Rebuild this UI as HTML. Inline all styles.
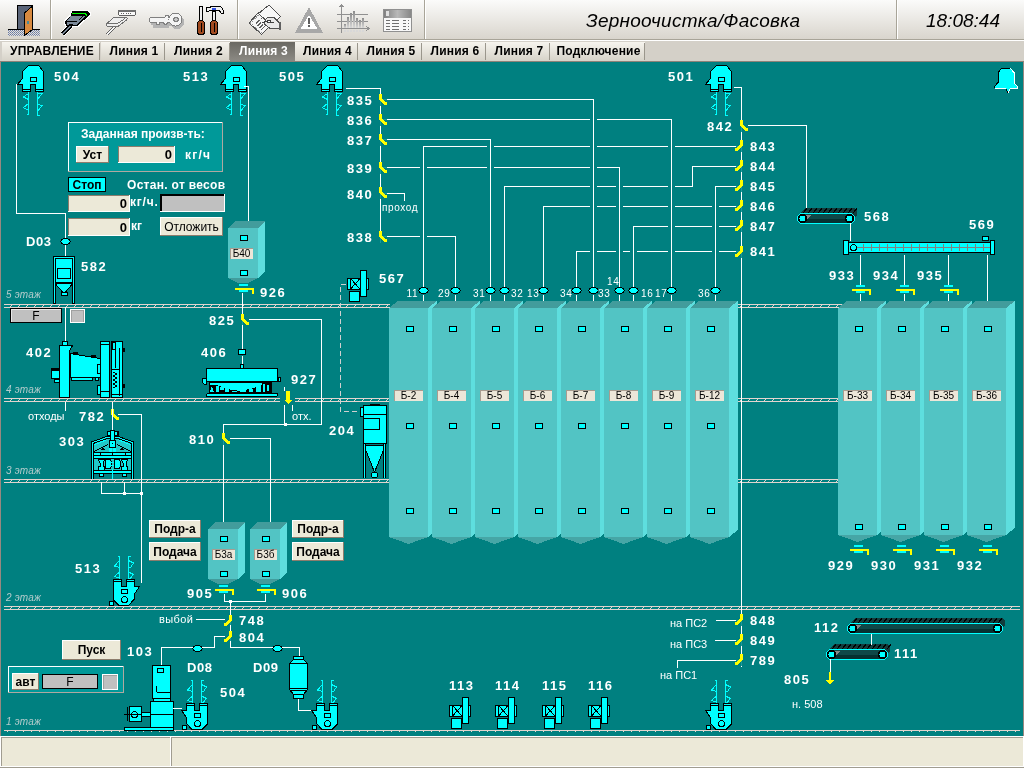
<!DOCTYPE html>
<html><head><meta charset="utf-8"><style>html,body{margin:0;padding:0;width:1024px;height:768px;overflow:hidden;background:#008080}</style></head>
<body>
<svg width="1024" height="768" viewBox="0 0 1024 768" style="position:absolute;left:0;top:0;will-change:transform" shape-rendering="crispEdges">
<defs><linearGradient id="tb" x1="0" y1="0" x2="0" y2="1"><stop offset="0" stop-color="#FBFBFA"/><stop offset="1" stop-color="#D9D5CD"/></linearGradient><linearGradient id="tab" x1="0" y1="0" x2="0" y2="1"><stop offset="0" stop-color="#F6F4EE"/><stop offset="1" stop-color="#D6D2C8"/></linearGradient><linearGradient id="tabs" x1="0" y1="0" x2="0" y2="1"><stop offset="0" stop-color="#6A6862"/><stop offset="1" stop-color="#8C8A84"/></linearGradient></defs>
<rect x="0" y="0" width="1024" height="39" fill="url(#tb)"/>
<rect x="0" y="39" width="1024" height="1" fill="#A8A498"/>
<rect x="0" y="40" width="1024" height="1" fill="#FFFFFF"/>
<rect x="424" y="0" width="1" height="39" fill="#A8A498"/>
<rect x="425" y="0" width="1" height="39" fill="#FFFFFF"/>
<rect x="896" y="0" width="1" height="39" fill="#A8A498"/>
<rect x="897" y="0" width="1" height="39" fill="#FFFFFF"/>
<rect x="50" y="0" width="1" height="39" fill="#A8A498"/>
<rect x="51" y="0" width="1" height="39" fill="#FFFFFF"/>
<rect x="237" y="0" width="1" height="39" fill="#A8A498"/>
<rect x="238" y="0" width="1" height="39" fill="#FFFFFF"/>
<defs><pattern id="dots" width="2" height="2" patternUnits="userSpaceOnUse"><rect width="2" height="2" fill="#E0E0E0"/><rect width="1" height="1" fill="#6878A0"/><rect x="1" y="1" width="1" height="1" fill="#8890A8"/></pattern><linearGradient id="tg" x1="0" y1="0" x2="0" y2="1"><stop offset="0" stop-color="#707070"/><stop offset="1" stop-color="#B0B0B0"/></linearGradient></defs>
<rect x="8" y="29" width="32" height="7" fill="url(#dots)"/>
<path d="M8,29.5 H17 M33,29.5 H40" stroke="#000" fill="none"/>
<rect x="17.5" y="5.5" width="15" height="24" fill="#5A6478" stroke="#000"/>
<path d="M24.5,13 L32.5,6 V29.5 L24.5,35.5 Z" fill="#D88A40" stroke="#000"/>
<rect x="26.5" y="21" width="2" height="3" fill="#4A8A9A"/>
<path d="M62.5,34 L71,25.5" stroke="#FFF" stroke-width="6" fill="none"/>
<path d="M70.5,16 L72.5,11 H88 L89.5,13 V15 L78,25.5 H66 L65,23 V21 Z" fill="none" stroke="#FFF" stroke-width="2.5"/>
<path d="M62.5,34 L71,25.5" stroke="#000" stroke-width="4" fill="none"/>
<path d="M62.5,34 L71,25.5" stroke="#7A8898" stroke-width="1.6" fill="none"/>
<path d="M70.5,16 L72.5,11 H88 L89.5,13 V15 L78,25.5 H66 L65,23 V21 Z" fill="#000"/>
<path d="M72,13.5 H85.5 L86.8,15.5" stroke="#00FF00" stroke-width="1.6" fill="none"/>
<path d="M71,15.5 H86 L77,24.5 H66.5 V21.5 Z" fill="#7A8898"/>
<path d="M67,21.5 H76.5 M78.5,20.5 L83,16" stroke="#000" stroke-width="1" fill="none"/>
<rect x="69" y="24" width="4" height="2" fill="#000"/>
<path d="M107,34.5 L115,26.5" stroke="#606060" stroke-width="3.2" fill="none"/><path d="M107,34.5 L115,26.5" stroke="#F4F4F4" stroke-width="1.2" fill="none"/>
<path d="M113.5,17.5 H126.5 Q127.5,18 127,19.5 L118,26.5 H107.5 Q106.5,26 106.5,25 V24 Z" fill="#EEEEEE" stroke="#707070"/>
<path d="M107.5,23.5 H117.5 L125,18.5" stroke="#707070" fill="none"/>
<rect x="118.5" y="10.5" width="17" height="5" rx="2" fill="#FAFAFA" stroke="#606060"/>
<rect x="118" y="10" width="18" height="2" rx="1" fill="#707070"/>
<path d="M121,13.5 H133" stroke="#606060" stroke-dasharray="1,1.3" fill="none"/>
<g transform="translate(1.5,2.5)" fill="#B4B4B4"><rect x="149" y="17" width="22" height="6" rx="2"/><circle cx="175.5" cy="19.5" r="7"/><rect x="151" y="22" width="16" height="3"/></g>
<path d="M151.5,17.5 H170 V22.5 H167.5 L166.5,24.5 H164.5 L163.5,22.5 H160 L159,24.5 H157 L156,22.5 H151.5 Q149.5,22.5 149.5,20 Q149.5,17.5 151.5,17.5 Z" fill="#F4F4F4" stroke="#808080"/>
<path d="M164.5,17.5 L166,15.5 H168 L169,17.5" fill="#F4F4F4" stroke="#808080"/>
<circle cx="175.5" cy="19.5" r="6.5" fill="#F4F4F4" stroke="#808080"/>
<rect x="169" y="18" width="3" height="4" fill="#F4F4F4"/>
<circle cx="176" cy="19.5" r="2.2" fill="#C8C8C8" stroke="#808080"/>
<rect x="199.5" y="6" width="3" height="15" fill="#F0F0F0" stroke="#000"/>
<rect x="197.5" y="20.5" width="7" height="14" rx="3" fill="#A04A20" stroke="#000"/>
<path d="M201,23 V32" stroke="#000" fill="none"/>
<path d="M206.5,7.5 H210 L211,6 H219 Q223,7 223.5,13 H221 L219,10 H210 L208.5,11.5 H206.5 Z" fill="#F0F0F0" stroke="#000"/>
<rect x="212" y="7.5" width="4" height="2" fill="#3050E0"/>
<rect x="212.5" y="11" width="3" height="10" fill="#F0F0F0" stroke="#000"/>
<rect x="210.5" y="20.5" width="7" height="14" rx="3" fill="#A04A20" stroke="#000"/>
<path d="M214,23 V32" stroke="#000" fill="none"/>
<path d="M258.5,13.5 L269,5 L280.5,16.5 L270,27 Z" fill="#F8F8F8" stroke="#505050"/>
<path d="M258.5,12.5 L249,23 L261.5,34.5 L271,25 L258.5,13.5 Z" fill="#F6F6F6" stroke="#505050"/>
<path d="M250.5,23 L259,14.5 M250.5,23 L261.5,33" stroke="#909090" stroke-dasharray="1,1" fill="none"/>
<path d="M256,23.5 L259.5,20 M257.5,26 L261,22.5 M259.5,28 L263,24.5 M261,30 L264.5,26.5 M261,19 L263,17" stroke="#606060" fill="none"/>
<path d="M265.5,19.5 L268.5,17 H273.5 L278.5,22 H280.5 V29.5 L277.5,28 H269.5 L264,24 Z" fill="#E8E8E8" stroke="#505050"/>
<rect x="279" y="22" width="2" height="8" fill="#606060"/>
<circle cx="269" cy="21.5" r="1.6" fill="#FFF" stroke="#404040"/>
<path d="M262,22.5 L267,21.5 M271,22.5 H274" stroke="#404040" fill="none"/>
<path d="M309,7 L323,33 H295 Z" fill="#A8A8A8"/>
<path d="M309,15 L317.5,29 H300.5 Z" fill="#FFFFFF"/>
<rect x="308" y="18" width="2" height="6" fill="#606060"/><rect x="308" y="25" width="2" height="2" fill="#606060"/>
<path d="M341.5,5 V33 M337,28.5 H369 M337,14.5 H368 M337,21.5 H368" stroke="#909090" fill="none"/>
<defs><linearGradient id="bg" x1="0" y1="0" x2="0" y2="1"><stop offset="0" stop-color="#8C8C8C"/><stop offset="1" stop-color="#D8D8D8"/></linearGradient><linearGradient id="tg2" x1="0" y1="0" x2="1" y2="0"><stop offset="0" stop-color="#808080"/><stop offset="0.5" stop-color="#B8B8B8"/><stop offset="1" stop-color="#888888"/></linearGradient></defs>
<rect x="344" y="24" width="2" height="4" fill="url(#bg)"/>
<rect x="347" y="17" width="2" height="11" fill="url(#bg)"/>
<rect x="350" y="13" width="2" height="15" fill="url(#bg)"/>
<rect x="353" y="11" width="2" height="17" fill="url(#bg)"/>
<rect x="356" y="18" width="2" height="10" fill="url(#bg)"/>
<rect x="359" y="20" width="2" height="8" fill="url(#bg)"/>
<rect x="362" y="18" width="2" height="10" fill="url(#bg)"/>
<path d="M344,31 H364" stroke="#D8D8D8" stroke-dasharray="1.5,1.5" stroke-width="2" fill="none"/>
<path d="M339.5,7 L341.5,4.5 L343.5,7 M366.5,26.5 L369,28.5 L366.5,30.5" stroke="#909090" fill="none"/>
<rect x="383.5" y="9.5" width="28" height="22" fill="#F8F8F8" stroke="#909090"/>
<rect x="384" y="10" width="27" height="8" fill="url(#tg2)"/><rect x="386" y="11" width="3" height="5" fill="#E0E0E0"/>
<path d="M386,20.5 H390 M392,20.5 H399 M403,20.5 H406 M408,20.5 H409" stroke="#707070" fill="none"/>
<path d="M386,23.5 H390 M392,23.5 H399 M403,23.5 H406 M408,23.5 H409" stroke="#707070" fill="none"/>
<path d="M386,26.5 H390 M392,26.5 H399 M403,26.5 H406 M408,26.5 H409" stroke="#707070" fill="none"/>
<path d="M386,29.5 H390 M392,29.5 H399 M403,29.5 H406 M408,29.5 H409" stroke="#707070" fill="none"/>
<text x="586" y="27" font-family="Liberation Sans" font-size="19" font-weight="normal" font-style="italic" fill="#000" text-anchor="start" letter-spacing="0.25">Зерноочистка/Фасовка</text>
<text x="926" y="27" font-family="Liberation Sans" font-size="19" font-weight="normal" font-style="italic" fill="#000" text-anchor="start">18:08:44</text>
<rect x="0" y="41" width="1024" height="21" fill="#D4D0C8"/>
<rect x="2" y="42" width="98" height="19" fill="url(#tab)"/>
<rect x="99" y="43" width="1" height="17" fill="#9A968C"/>
<text x="52.0" y="55" font-family="Liberation Sans" font-size="12" font-weight="bold" font-style="normal" fill="#000" text-anchor="middle" letter-spacing="0.2">УПРАВЛЕНИЕ</text>
<rect x="101" y="42" width="64" height="19" fill="url(#tab)"/>
<rect x="164" y="43" width="1" height="17" fill="#9A968C"/>
<text x="134.0" y="55" font-family="Liberation Sans" font-size="12" font-weight="bold" font-style="normal" fill="#000" text-anchor="middle" letter-spacing="0.2">Линия 1</text>
<rect x="165" y="42" width="65" height="19" fill="url(#tab)"/>
<rect x="229" y="43" width="1" height="17" fill="#9A968C"/>
<text x="198.5" y="55" font-family="Liberation Sans" font-size="12" font-weight="bold" font-style="normal" fill="#000" text-anchor="middle" letter-spacing="0.2">Линия 2</text>
<rect x="230" y="42" width="65" height="19" fill="url(#tabs)"/>
<text x="263.5" y="55" font-family="Liberation Sans" font-size="12" font-weight="bold" font-style="normal" fill="#FFF" text-anchor="middle" letter-spacing="0.2">Линия 3</text>
<rect x="295" y="42" width="63" height="19" fill="url(#tab)"/>
<rect x="357" y="43" width="1" height="17" fill="#9A968C"/>
<text x="327.5" y="55" font-family="Liberation Sans" font-size="12" font-weight="bold" font-style="normal" fill="#000" text-anchor="middle" letter-spacing="0.2">Линия 4</text>
<rect x="358" y="42" width="64" height="19" fill="url(#tab)"/>
<rect x="421" y="43" width="1" height="17" fill="#9A968C"/>
<text x="391.0" y="55" font-family="Liberation Sans" font-size="12" font-weight="bold" font-style="normal" fill="#000" text-anchor="middle" letter-spacing="0.2">Линия 5</text>
<rect x="422" y="42" width="64" height="19" fill="url(#tab)"/>
<rect x="485" y="43" width="1" height="17" fill="#9A968C"/>
<text x="455.0" y="55" font-family="Liberation Sans" font-size="12" font-weight="bold" font-style="normal" fill="#000" text-anchor="middle" letter-spacing="0.2">Линия 6</text>
<rect x="486" y="42" width="64" height="19" fill="url(#tab)"/>
<rect x="549" y="43" width="1" height="17" fill="#9A968C"/>
<text x="519.0" y="55" font-family="Liberation Sans" font-size="12" font-weight="bold" font-style="normal" fill="#000" text-anchor="middle" letter-spacing="0.2">Линия 7</text>
<rect x="550" y="42" width="95" height="19" fill="url(#tab)"/>
<rect x="644" y="43" width="1" height="17" fill="#9A968C"/>
<text x="598.5" y="55" font-family="Liberation Sans" font-size="12" font-weight="bold" font-style="normal" fill="#000" text-anchor="middle" letter-spacing="0.2">Подключение</text>
<rect x="0" y="61" width="1024" height="1" fill="#8C8278"/>
<rect x="0" y="62" width="1024" height="674" fill="#008080"/>
<rect x="0" y="62" width="1" height="674" fill="#988880"/>
<rect x="0" y="736" width="1024" height="32" fill="#ECE9D8"/>
<rect x="0" y="736" width="1024" height="1" fill="#FFFFFF"/>
<rect x="1" y="737" width="169" height="1" fill="#A09C90"/>
<rect x="1" y="737" width="1" height="29" fill="#A09C90"/>
<rect x="170" y="737" width="1" height="30" fill="#FFFFFF"/>
<rect x="1" y="766" width="170" height="1" fill="#FFFFFF"/>
<rect x="171" y="737" width="852" height="1" fill="#A09C90"/>
<rect x="171" y="737" width="1" height="29" fill="#A09C90"/>
<rect x="1023" y="737" width="1" height="30" fill="#FFFFFF"/>
<rect x="171" y="766" width="853" height="1" fill="#FFFFFF"/>
<rect x="0" y="736" width="1" height="32" fill="#FFFFFF"/>
<rect x="0" y="767" width="1024" height="1" fill="#A09C90"/>
<rect x="4" y="304" width="386" height="1" fill="#E2D4CE"/>
<rect x="4" y="307" width="386" height="1" fill="#E2D4CE"/>
<g fill="#E2D4CE"><rect x="11" y="305" width="1" height="1"/><rect x="10" y="306" width="1" height="1"/><rect x="19" y="305" width="1" height="1"/><rect x="18" y="306" width="1" height="1"/><rect x="27" y="305" width="1" height="1"/><rect x="26" y="306" width="1" height="1"/><rect x="35" y="305" width="1" height="1"/><rect x="34" y="306" width="1" height="1"/><rect x="43" y="305" width="1" height="1"/><rect x="42" y="306" width="1" height="1"/><rect x="51" y="305" width="1" height="1"/><rect x="50" y="306" width="1" height="1"/><rect x="59" y="305" width="1" height="1"/><rect x="58" y="306" width="1" height="1"/><rect x="67" y="305" width="1" height="1"/><rect x="66" y="306" width="1" height="1"/><rect x="75" y="305" width="1" height="1"/><rect x="74" y="306" width="1" height="1"/><rect x="83" y="305" width="1" height="1"/><rect x="82" y="306" width="1" height="1"/><rect x="91" y="305" width="1" height="1"/><rect x="90" y="306" width="1" height="1"/><rect x="99" y="305" width="1" height="1"/><rect x="98" y="306" width="1" height="1"/><rect x="107" y="305" width="1" height="1"/><rect x="106" y="306" width="1" height="1"/><rect x="115" y="305" width="1" height="1"/><rect x="114" y="306" width="1" height="1"/><rect x="123" y="305" width="1" height="1"/><rect x="122" y="306" width="1" height="1"/><rect x="131" y="305" width="1" height="1"/><rect x="130" y="306" width="1" height="1"/><rect x="139" y="305" width="1" height="1"/><rect x="138" y="306" width="1" height="1"/><rect x="147" y="305" width="1" height="1"/><rect x="146" y="306" width="1" height="1"/><rect x="155" y="305" width="1" height="1"/><rect x="154" y="306" width="1" height="1"/><rect x="163" y="305" width="1" height="1"/><rect x="162" y="306" width="1" height="1"/><rect x="171" y="305" width="1" height="1"/><rect x="170" y="306" width="1" height="1"/><rect x="179" y="305" width="1" height="1"/><rect x="178" y="306" width="1" height="1"/><rect x="187" y="305" width="1" height="1"/><rect x="186" y="306" width="1" height="1"/><rect x="195" y="305" width="1" height="1"/><rect x="194" y="306" width="1" height="1"/><rect x="203" y="305" width="1" height="1"/><rect x="202" y="306" width="1" height="1"/><rect x="211" y="305" width="1" height="1"/><rect x="210" y="306" width="1" height="1"/><rect x="219" y="305" width="1" height="1"/><rect x="218" y="306" width="1" height="1"/><rect x="227" y="305" width="1" height="1"/><rect x="226" y="306" width="1" height="1"/><rect x="235" y="305" width="1" height="1"/><rect x="234" y="306" width="1" height="1"/><rect x="243" y="305" width="1" height="1"/><rect x="242" y="306" width="1" height="1"/><rect x="251" y="305" width="1" height="1"/><rect x="250" y="306" width="1" height="1"/><rect x="259" y="305" width="1" height="1"/><rect x="258" y="306" width="1" height="1"/><rect x="267" y="305" width="1" height="1"/><rect x="266" y="306" width="1" height="1"/><rect x="275" y="305" width="1" height="1"/><rect x="274" y="306" width="1" height="1"/><rect x="283" y="305" width="1" height="1"/><rect x="282" y="306" width="1" height="1"/><rect x="291" y="305" width="1" height="1"/><rect x="290" y="306" width="1" height="1"/><rect x="299" y="305" width="1" height="1"/><rect x="298" y="306" width="1" height="1"/><rect x="307" y="305" width="1" height="1"/><rect x="306" y="306" width="1" height="1"/><rect x="315" y="305" width="1" height="1"/><rect x="314" y="306" width="1" height="1"/><rect x="323" y="305" width="1" height="1"/><rect x="322" y="306" width="1" height="1"/><rect x="331" y="305" width="1" height="1"/><rect x="330" y="306" width="1" height="1"/><rect x="339" y="305" width="1" height="1"/><rect x="338" y="306" width="1" height="1"/><rect x="347" y="305" width="1" height="1"/><rect x="346" y="306" width="1" height="1"/><rect x="355" y="305" width="1" height="1"/><rect x="354" y="306" width="1" height="1"/><rect x="363" y="305" width="1" height="1"/><rect x="362" y="306" width="1" height="1"/><rect x="371" y="305" width="1" height="1"/><rect x="370" y="306" width="1" height="1"/><rect x="379" y="305" width="1" height="1"/><rect x="378" y="306" width="1" height="1"/><rect x="387" y="305" width="1" height="1"/><rect x="386" y="306" width="1" height="1"/></g>
<rect x="738" y="304" width="105" height="1" fill="#E2D4CE"/>
<rect x="738" y="307" width="105" height="1" fill="#E2D4CE"/>
<g fill="#E2D4CE"><rect x="741" y="305" width="1" height="1"/><rect x="740" y="306" width="1" height="1"/><rect x="749" y="305" width="1" height="1"/><rect x="748" y="306" width="1" height="1"/><rect x="757" y="305" width="1" height="1"/><rect x="756" y="306" width="1" height="1"/><rect x="765" y="305" width="1" height="1"/><rect x="764" y="306" width="1" height="1"/><rect x="773" y="305" width="1" height="1"/><rect x="772" y="306" width="1" height="1"/><rect x="781" y="305" width="1" height="1"/><rect x="780" y="306" width="1" height="1"/><rect x="789" y="305" width="1" height="1"/><rect x="788" y="306" width="1" height="1"/><rect x="797" y="305" width="1" height="1"/><rect x="796" y="306" width="1" height="1"/><rect x="805" y="305" width="1" height="1"/><rect x="804" y="306" width="1" height="1"/><rect x="813" y="305" width="1" height="1"/><rect x="812" y="306" width="1" height="1"/><rect x="821" y="305" width="1" height="1"/><rect x="820" y="306" width="1" height="1"/><rect x="829" y="305" width="1" height="1"/><rect x="828" y="306" width="1" height="1"/><rect x="837" y="305" width="1" height="1"/><rect x="836" y="306" width="1" height="1"/></g>
<rect x="4" y="398" width="276" height="1" fill="#E2D4CE"/>
<rect x="4" y="401" width="276" height="1" fill="#E2D4CE"/>
<g fill="#E2D4CE"><rect x="11" y="399" width="1" height="1"/><rect x="10" y="400" width="1" height="1"/><rect x="19" y="399" width="1" height="1"/><rect x="18" y="400" width="1" height="1"/><rect x="27" y="399" width="1" height="1"/><rect x="26" y="400" width="1" height="1"/><rect x="35" y="399" width="1" height="1"/><rect x="34" y="400" width="1" height="1"/><rect x="43" y="399" width="1" height="1"/><rect x="42" y="400" width="1" height="1"/><rect x="51" y="399" width="1" height="1"/><rect x="50" y="400" width="1" height="1"/><rect x="59" y="399" width="1" height="1"/><rect x="58" y="400" width="1" height="1"/><rect x="67" y="399" width="1" height="1"/><rect x="66" y="400" width="1" height="1"/><rect x="75" y="399" width="1" height="1"/><rect x="74" y="400" width="1" height="1"/><rect x="83" y="399" width="1" height="1"/><rect x="82" y="400" width="1" height="1"/><rect x="91" y="399" width="1" height="1"/><rect x="90" y="400" width="1" height="1"/><rect x="99" y="399" width="1" height="1"/><rect x="98" y="400" width="1" height="1"/><rect x="107" y="399" width="1" height="1"/><rect x="106" y="400" width="1" height="1"/><rect x="115" y="399" width="1" height="1"/><rect x="114" y="400" width="1" height="1"/><rect x="123" y="399" width="1" height="1"/><rect x="122" y="400" width="1" height="1"/><rect x="131" y="399" width="1" height="1"/><rect x="130" y="400" width="1" height="1"/><rect x="139" y="399" width="1" height="1"/><rect x="138" y="400" width="1" height="1"/><rect x="147" y="399" width="1" height="1"/><rect x="146" y="400" width="1" height="1"/><rect x="155" y="399" width="1" height="1"/><rect x="154" y="400" width="1" height="1"/><rect x="163" y="399" width="1" height="1"/><rect x="162" y="400" width="1" height="1"/><rect x="171" y="399" width="1" height="1"/><rect x="170" y="400" width="1" height="1"/><rect x="179" y="399" width="1" height="1"/><rect x="178" y="400" width="1" height="1"/><rect x="187" y="399" width="1" height="1"/><rect x="186" y="400" width="1" height="1"/><rect x="195" y="399" width="1" height="1"/><rect x="194" y="400" width="1" height="1"/><rect x="203" y="399" width="1" height="1"/><rect x="202" y="400" width="1" height="1"/><rect x="211" y="399" width="1" height="1"/><rect x="210" y="400" width="1" height="1"/><rect x="219" y="399" width="1" height="1"/><rect x="218" y="400" width="1" height="1"/><rect x="227" y="399" width="1" height="1"/><rect x="226" y="400" width="1" height="1"/><rect x="235" y="399" width="1" height="1"/><rect x="234" y="400" width="1" height="1"/><rect x="243" y="399" width="1" height="1"/><rect x="242" y="400" width="1" height="1"/><rect x="251" y="399" width="1" height="1"/><rect x="250" y="400" width="1" height="1"/><rect x="259" y="399" width="1" height="1"/><rect x="258" y="400" width="1" height="1"/><rect x="267" y="399" width="1" height="1"/><rect x="266" y="400" width="1" height="1"/><rect x="275" y="399" width="1" height="1"/><rect x="274" y="400" width="1" height="1"/></g>
<rect x="295" y="398" width="95" height="1" fill="#E2D4CE"/>
<rect x="295" y="401" width="95" height="1" fill="#E2D4CE"/>
<g fill="#E2D4CE"><rect x="299" y="399" width="1" height="1"/><rect x="298" y="400" width="1" height="1"/><rect x="307" y="399" width="1" height="1"/><rect x="306" y="400" width="1" height="1"/><rect x="315" y="399" width="1" height="1"/><rect x="314" y="400" width="1" height="1"/><rect x="323" y="399" width="1" height="1"/><rect x="322" y="400" width="1" height="1"/><rect x="331" y="399" width="1" height="1"/><rect x="330" y="400" width="1" height="1"/><rect x="339" y="399" width="1" height="1"/><rect x="338" y="400" width="1" height="1"/><rect x="347" y="399" width="1" height="1"/><rect x="346" y="400" width="1" height="1"/><rect x="355" y="399" width="1" height="1"/><rect x="354" y="400" width="1" height="1"/><rect x="363" y="399" width="1" height="1"/><rect x="362" y="400" width="1" height="1"/><rect x="371" y="399" width="1" height="1"/><rect x="370" y="400" width="1" height="1"/><rect x="379" y="399" width="1" height="1"/><rect x="378" y="400" width="1" height="1"/><rect x="387" y="399" width="1" height="1"/><rect x="386" y="400" width="1" height="1"/></g>
<rect x="738" y="398" width="101" height="1" fill="#E2D4CE"/>
<rect x="738" y="401" width="101" height="1" fill="#E2D4CE"/>
<g fill="#E2D4CE"><rect x="741" y="399" width="1" height="1"/><rect x="740" y="400" width="1" height="1"/><rect x="749" y="399" width="1" height="1"/><rect x="748" y="400" width="1" height="1"/><rect x="757" y="399" width="1" height="1"/><rect x="756" y="400" width="1" height="1"/><rect x="765" y="399" width="1" height="1"/><rect x="764" y="400" width="1" height="1"/><rect x="773" y="399" width="1" height="1"/><rect x="772" y="400" width="1" height="1"/><rect x="781" y="399" width="1" height="1"/><rect x="780" y="400" width="1" height="1"/><rect x="789" y="399" width="1" height="1"/><rect x="788" y="400" width="1" height="1"/><rect x="797" y="399" width="1" height="1"/><rect x="796" y="400" width="1" height="1"/><rect x="805" y="399" width="1" height="1"/><rect x="804" y="400" width="1" height="1"/><rect x="813" y="399" width="1" height="1"/><rect x="812" y="400" width="1" height="1"/><rect x="821" y="399" width="1" height="1"/><rect x="820" y="400" width="1" height="1"/><rect x="829" y="399" width="1" height="1"/><rect x="828" y="400" width="1" height="1"/><rect x="837" y="399" width="1" height="1"/><rect x="836" y="400" width="1" height="1"/></g>
<rect x="4" y="479" width="386" height="1" fill="#E2D4CE"/>
<rect x="4" y="482" width="386" height="1" fill="#E2D4CE"/>
<g fill="#E2D4CE"><rect x="11" y="480" width="1" height="1"/><rect x="10" y="481" width="1" height="1"/><rect x="19" y="480" width="1" height="1"/><rect x="18" y="481" width="1" height="1"/><rect x="27" y="480" width="1" height="1"/><rect x="26" y="481" width="1" height="1"/><rect x="35" y="480" width="1" height="1"/><rect x="34" y="481" width="1" height="1"/><rect x="43" y="480" width="1" height="1"/><rect x="42" y="481" width="1" height="1"/><rect x="51" y="480" width="1" height="1"/><rect x="50" y="481" width="1" height="1"/><rect x="59" y="480" width="1" height="1"/><rect x="58" y="481" width="1" height="1"/><rect x="67" y="480" width="1" height="1"/><rect x="66" y="481" width="1" height="1"/><rect x="75" y="480" width="1" height="1"/><rect x="74" y="481" width="1" height="1"/><rect x="83" y="480" width="1" height="1"/><rect x="82" y="481" width="1" height="1"/><rect x="91" y="480" width="1" height="1"/><rect x="90" y="481" width="1" height="1"/><rect x="99" y="480" width="1" height="1"/><rect x="98" y="481" width="1" height="1"/><rect x="107" y="480" width="1" height="1"/><rect x="106" y="481" width="1" height="1"/><rect x="115" y="480" width="1" height="1"/><rect x="114" y="481" width="1" height="1"/><rect x="123" y="480" width="1" height="1"/><rect x="122" y="481" width="1" height="1"/><rect x="131" y="480" width="1" height="1"/><rect x="130" y="481" width="1" height="1"/><rect x="139" y="480" width="1" height="1"/><rect x="138" y="481" width="1" height="1"/><rect x="147" y="480" width="1" height="1"/><rect x="146" y="481" width="1" height="1"/><rect x="155" y="480" width="1" height="1"/><rect x="154" y="481" width="1" height="1"/><rect x="163" y="480" width="1" height="1"/><rect x="162" y="481" width="1" height="1"/><rect x="171" y="480" width="1" height="1"/><rect x="170" y="481" width="1" height="1"/><rect x="179" y="480" width="1" height="1"/><rect x="178" y="481" width="1" height="1"/><rect x="187" y="480" width="1" height="1"/><rect x="186" y="481" width="1" height="1"/><rect x="195" y="480" width="1" height="1"/><rect x="194" y="481" width="1" height="1"/><rect x="203" y="480" width="1" height="1"/><rect x="202" y="481" width="1" height="1"/><rect x="211" y="480" width="1" height="1"/><rect x="210" y="481" width="1" height="1"/><rect x="219" y="480" width="1" height="1"/><rect x="218" y="481" width="1" height="1"/><rect x="227" y="480" width="1" height="1"/><rect x="226" y="481" width="1" height="1"/><rect x="235" y="480" width="1" height="1"/><rect x="234" y="481" width="1" height="1"/><rect x="243" y="480" width="1" height="1"/><rect x="242" y="481" width="1" height="1"/><rect x="251" y="480" width="1" height="1"/><rect x="250" y="481" width="1" height="1"/><rect x="259" y="480" width="1" height="1"/><rect x="258" y="481" width="1" height="1"/><rect x="267" y="480" width="1" height="1"/><rect x="266" y="481" width="1" height="1"/><rect x="275" y="480" width="1" height="1"/><rect x="274" y="481" width="1" height="1"/><rect x="283" y="480" width="1" height="1"/><rect x="282" y="481" width="1" height="1"/><rect x="291" y="480" width="1" height="1"/><rect x="290" y="481" width="1" height="1"/><rect x="299" y="480" width="1" height="1"/><rect x="298" y="481" width="1" height="1"/><rect x="307" y="480" width="1" height="1"/><rect x="306" y="481" width="1" height="1"/><rect x="315" y="480" width="1" height="1"/><rect x="314" y="481" width="1" height="1"/><rect x="323" y="480" width="1" height="1"/><rect x="322" y="481" width="1" height="1"/><rect x="331" y="480" width="1" height="1"/><rect x="330" y="481" width="1" height="1"/><rect x="339" y="480" width="1" height="1"/><rect x="338" y="481" width="1" height="1"/><rect x="347" y="480" width="1" height="1"/><rect x="346" y="481" width="1" height="1"/><rect x="355" y="480" width="1" height="1"/><rect x="354" y="481" width="1" height="1"/><rect x="363" y="480" width="1" height="1"/><rect x="362" y="481" width="1" height="1"/><rect x="371" y="480" width="1" height="1"/><rect x="370" y="481" width="1" height="1"/><rect x="379" y="480" width="1" height="1"/><rect x="378" y="481" width="1" height="1"/><rect x="387" y="480" width="1" height="1"/><rect x="386" y="481" width="1" height="1"/></g>
<rect x="738" y="479" width="101" height="1" fill="#E2D4CE"/>
<rect x="738" y="482" width="101" height="1" fill="#E2D4CE"/>
<g fill="#E2D4CE"><rect x="741" y="480" width="1" height="1"/><rect x="740" y="481" width="1" height="1"/><rect x="749" y="480" width="1" height="1"/><rect x="748" y="481" width="1" height="1"/><rect x="757" y="480" width="1" height="1"/><rect x="756" y="481" width="1" height="1"/><rect x="765" y="480" width="1" height="1"/><rect x="764" y="481" width="1" height="1"/><rect x="773" y="480" width="1" height="1"/><rect x="772" y="481" width="1" height="1"/><rect x="781" y="480" width="1" height="1"/><rect x="780" y="481" width="1" height="1"/><rect x="789" y="480" width="1" height="1"/><rect x="788" y="481" width="1" height="1"/><rect x="797" y="480" width="1" height="1"/><rect x="796" y="481" width="1" height="1"/><rect x="805" y="480" width="1" height="1"/><rect x="804" y="481" width="1" height="1"/><rect x="813" y="480" width="1" height="1"/><rect x="812" y="481" width="1" height="1"/><rect x="821" y="480" width="1" height="1"/><rect x="820" y="481" width="1" height="1"/><rect x="829" y="480" width="1" height="1"/><rect x="828" y="481" width="1" height="1"/><rect x="837" y="480" width="1" height="1"/><rect x="836" y="481" width="1" height="1"/></g>
<rect x="4" y="606" width="1016" height="1" fill="#E2D4CE"/>
<rect x="4" y="609" width="1016" height="1" fill="#E2D4CE"/>
<g fill="#E2D4CE"><rect x="11" y="607" width="1" height="1"/><rect x="10" y="608" width="1" height="1"/><rect x="19" y="607" width="1" height="1"/><rect x="18" y="608" width="1" height="1"/><rect x="27" y="607" width="1" height="1"/><rect x="26" y="608" width="1" height="1"/><rect x="35" y="607" width="1" height="1"/><rect x="34" y="608" width="1" height="1"/><rect x="43" y="607" width="1" height="1"/><rect x="42" y="608" width="1" height="1"/><rect x="51" y="607" width="1" height="1"/><rect x="50" y="608" width="1" height="1"/><rect x="59" y="607" width="1" height="1"/><rect x="58" y="608" width="1" height="1"/><rect x="67" y="607" width="1" height="1"/><rect x="66" y="608" width="1" height="1"/><rect x="75" y="607" width="1" height="1"/><rect x="74" y="608" width="1" height="1"/><rect x="83" y="607" width="1" height="1"/><rect x="82" y="608" width="1" height="1"/><rect x="91" y="607" width="1" height="1"/><rect x="90" y="608" width="1" height="1"/><rect x="99" y="607" width="1" height="1"/><rect x="98" y="608" width="1" height="1"/><rect x="107" y="607" width="1" height="1"/><rect x="106" y="608" width="1" height="1"/><rect x="115" y="607" width="1" height="1"/><rect x="114" y="608" width="1" height="1"/><rect x="123" y="607" width="1" height="1"/><rect x="122" y="608" width="1" height="1"/><rect x="131" y="607" width="1" height="1"/><rect x="130" y="608" width="1" height="1"/><rect x="139" y="607" width="1" height="1"/><rect x="138" y="608" width="1" height="1"/><rect x="147" y="607" width="1" height="1"/><rect x="146" y="608" width="1" height="1"/><rect x="155" y="607" width="1" height="1"/><rect x="154" y="608" width="1" height="1"/><rect x="163" y="607" width="1" height="1"/><rect x="162" y="608" width="1" height="1"/><rect x="171" y="607" width="1" height="1"/><rect x="170" y="608" width="1" height="1"/><rect x="179" y="607" width="1" height="1"/><rect x="178" y="608" width="1" height="1"/><rect x="187" y="607" width="1" height="1"/><rect x="186" y="608" width="1" height="1"/><rect x="195" y="607" width="1" height="1"/><rect x="194" y="608" width="1" height="1"/><rect x="203" y="607" width="1" height="1"/><rect x="202" y="608" width="1" height="1"/><rect x="211" y="607" width="1" height="1"/><rect x="210" y="608" width="1" height="1"/><rect x="219" y="607" width="1" height="1"/><rect x="218" y="608" width="1" height="1"/><rect x="227" y="607" width="1" height="1"/><rect x="226" y="608" width="1" height="1"/><rect x="235" y="607" width="1" height="1"/><rect x="234" y="608" width="1" height="1"/><rect x="243" y="607" width="1" height="1"/><rect x="242" y="608" width="1" height="1"/><rect x="251" y="607" width="1" height="1"/><rect x="250" y="608" width="1" height="1"/><rect x="259" y="607" width="1" height="1"/><rect x="258" y="608" width="1" height="1"/><rect x="267" y="607" width="1" height="1"/><rect x="266" y="608" width="1" height="1"/><rect x="275" y="607" width="1" height="1"/><rect x="274" y="608" width="1" height="1"/><rect x="283" y="607" width="1" height="1"/><rect x="282" y="608" width="1" height="1"/><rect x="291" y="607" width="1" height="1"/><rect x="290" y="608" width="1" height="1"/><rect x="299" y="607" width="1" height="1"/><rect x="298" y="608" width="1" height="1"/><rect x="307" y="607" width="1" height="1"/><rect x="306" y="608" width="1" height="1"/><rect x="315" y="607" width="1" height="1"/><rect x="314" y="608" width="1" height="1"/><rect x="323" y="607" width="1" height="1"/><rect x="322" y="608" width="1" height="1"/><rect x="331" y="607" width="1" height="1"/><rect x="330" y="608" width="1" height="1"/><rect x="339" y="607" width="1" height="1"/><rect x="338" y="608" width="1" height="1"/><rect x="347" y="607" width="1" height="1"/><rect x="346" y="608" width="1" height="1"/><rect x="355" y="607" width="1" height="1"/><rect x="354" y="608" width="1" height="1"/><rect x="363" y="607" width="1" height="1"/><rect x="362" y="608" width="1" height="1"/><rect x="371" y="607" width="1" height="1"/><rect x="370" y="608" width="1" height="1"/><rect x="379" y="607" width="1" height="1"/><rect x="378" y="608" width="1" height="1"/><rect x="387" y="607" width="1" height="1"/><rect x="386" y="608" width="1" height="1"/><rect x="395" y="607" width="1" height="1"/><rect x="394" y="608" width="1" height="1"/><rect x="403" y="607" width="1" height="1"/><rect x="402" y="608" width="1" height="1"/><rect x="411" y="607" width="1" height="1"/><rect x="410" y="608" width="1" height="1"/><rect x="419" y="607" width="1" height="1"/><rect x="418" y="608" width="1" height="1"/><rect x="427" y="607" width="1" height="1"/><rect x="426" y="608" width="1" height="1"/><rect x="435" y="607" width="1" height="1"/><rect x="434" y="608" width="1" height="1"/><rect x="443" y="607" width="1" height="1"/><rect x="442" y="608" width="1" height="1"/><rect x="451" y="607" width="1" height="1"/><rect x="450" y="608" width="1" height="1"/><rect x="459" y="607" width="1" height="1"/><rect x="458" y="608" width="1" height="1"/><rect x="467" y="607" width="1" height="1"/><rect x="466" y="608" width="1" height="1"/><rect x="475" y="607" width="1" height="1"/><rect x="474" y="608" width="1" height="1"/><rect x="483" y="607" width="1" height="1"/><rect x="482" y="608" width="1" height="1"/><rect x="491" y="607" width="1" height="1"/><rect x="490" y="608" width="1" height="1"/><rect x="499" y="607" width="1" height="1"/><rect x="498" y="608" width="1" height="1"/><rect x="507" y="607" width="1" height="1"/><rect x="506" y="608" width="1" height="1"/><rect x="515" y="607" width="1" height="1"/><rect x="514" y="608" width="1" height="1"/><rect x="523" y="607" width="1" height="1"/><rect x="522" y="608" width="1" height="1"/><rect x="531" y="607" width="1" height="1"/><rect x="530" y="608" width="1" height="1"/><rect x="539" y="607" width="1" height="1"/><rect x="538" y="608" width="1" height="1"/><rect x="547" y="607" width="1" height="1"/><rect x="546" y="608" width="1" height="1"/><rect x="555" y="607" width="1" height="1"/><rect x="554" y="608" width="1" height="1"/><rect x="563" y="607" width="1" height="1"/><rect x="562" y="608" width="1" height="1"/><rect x="571" y="607" width="1" height="1"/><rect x="570" y="608" width="1" height="1"/><rect x="579" y="607" width="1" height="1"/><rect x="578" y="608" width="1" height="1"/><rect x="587" y="607" width="1" height="1"/><rect x="586" y="608" width="1" height="1"/><rect x="595" y="607" width="1" height="1"/><rect x="594" y="608" width="1" height="1"/><rect x="603" y="607" width="1" height="1"/><rect x="602" y="608" width="1" height="1"/><rect x="611" y="607" width="1" height="1"/><rect x="610" y="608" width="1" height="1"/><rect x="619" y="607" width="1" height="1"/><rect x="618" y="608" width="1" height="1"/><rect x="627" y="607" width="1" height="1"/><rect x="626" y="608" width="1" height="1"/><rect x="635" y="607" width="1" height="1"/><rect x="634" y="608" width="1" height="1"/><rect x="643" y="607" width="1" height="1"/><rect x="642" y="608" width="1" height="1"/><rect x="651" y="607" width="1" height="1"/><rect x="650" y="608" width="1" height="1"/><rect x="659" y="607" width="1" height="1"/><rect x="658" y="608" width="1" height="1"/><rect x="667" y="607" width="1" height="1"/><rect x="666" y="608" width="1" height="1"/><rect x="675" y="607" width="1" height="1"/><rect x="674" y="608" width="1" height="1"/><rect x="683" y="607" width="1" height="1"/><rect x="682" y="608" width="1" height="1"/><rect x="691" y="607" width="1" height="1"/><rect x="690" y="608" width="1" height="1"/><rect x="699" y="607" width="1" height="1"/><rect x="698" y="608" width="1" height="1"/><rect x="707" y="607" width="1" height="1"/><rect x="706" y="608" width="1" height="1"/><rect x="715" y="607" width="1" height="1"/><rect x="714" y="608" width="1" height="1"/><rect x="723" y="607" width="1" height="1"/><rect x="722" y="608" width="1" height="1"/><rect x="731" y="607" width="1" height="1"/><rect x="730" y="608" width="1" height="1"/><rect x="739" y="607" width="1" height="1"/><rect x="738" y="608" width="1" height="1"/><rect x="747" y="607" width="1" height="1"/><rect x="746" y="608" width="1" height="1"/><rect x="755" y="607" width="1" height="1"/><rect x="754" y="608" width="1" height="1"/><rect x="763" y="607" width="1" height="1"/><rect x="762" y="608" width="1" height="1"/><rect x="771" y="607" width="1" height="1"/><rect x="770" y="608" width="1" height="1"/><rect x="779" y="607" width="1" height="1"/><rect x="778" y="608" width="1" height="1"/><rect x="787" y="607" width="1" height="1"/><rect x="786" y="608" width="1" height="1"/><rect x="795" y="607" width="1" height="1"/><rect x="794" y="608" width="1" height="1"/><rect x="803" y="607" width="1" height="1"/><rect x="802" y="608" width="1" height="1"/><rect x="811" y="607" width="1" height="1"/><rect x="810" y="608" width="1" height="1"/><rect x="819" y="607" width="1" height="1"/><rect x="818" y="608" width="1" height="1"/><rect x="827" y="607" width="1" height="1"/><rect x="826" y="608" width="1" height="1"/><rect x="835" y="607" width="1" height="1"/><rect x="834" y="608" width="1" height="1"/><rect x="843" y="607" width="1" height="1"/><rect x="842" y="608" width="1" height="1"/><rect x="851" y="607" width="1" height="1"/><rect x="850" y="608" width="1" height="1"/><rect x="859" y="607" width="1" height="1"/><rect x="858" y="608" width="1" height="1"/><rect x="867" y="607" width="1" height="1"/><rect x="866" y="608" width="1" height="1"/><rect x="875" y="607" width="1" height="1"/><rect x="874" y="608" width="1" height="1"/><rect x="883" y="607" width="1" height="1"/><rect x="882" y="608" width="1" height="1"/><rect x="891" y="607" width="1" height="1"/><rect x="890" y="608" width="1" height="1"/><rect x="899" y="607" width="1" height="1"/><rect x="898" y="608" width="1" height="1"/><rect x="907" y="607" width="1" height="1"/><rect x="906" y="608" width="1" height="1"/><rect x="915" y="607" width="1" height="1"/><rect x="914" y="608" width="1" height="1"/><rect x="923" y="607" width="1" height="1"/><rect x="922" y="608" width="1" height="1"/><rect x="931" y="607" width="1" height="1"/><rect x="930" y="608" width="1" height="1"/><rect x="939" y="607" width="1" height="1"/><rect x="938" y="608" width="1" height="1"/><rect x="947" y="607" width="1" height="1"/><rect x="946" y="608" width="1" height="1"/><rect x="955" y="607" width="1" height="1"/><rect x="954" y="608" width="1" height="1"/><rect x="963" y="607" width="1" height="1"/><rect x="962" y="608" width="1" height="1"/><rect x="971" y="607" width="1" height="1"/><rect x="970" y="608" width="1" height="1"/><rect x="979" y="607" width="1" height="1"/><rect x="978" y="608" width="1" height="1"/><rect x="987" y="607" width="1" height="1"/><rect x="986" y="608" width="1" height="1"/><rect x="995" y="607" width="1" height="1"/><rect x="994" y="608" width="1" height="1"/><rect x="1003" y="607" width="1" height="1"/><rect x="1002" y="608" width="1" height="1"/><rect x="1011" y="607" width="1" height="1"/><rect x="1010" y="608" width="1" height="1"/></g>
<rect x="4" y="730" width="1016" height="1" fill="#E2D4CE"/>
<path d="M7.5,731 L7.5,732 M15.5,731 L15.5,732 M23.5,731 L23.5,732 M31.5,731 L31.5,732 M39.5,731 L39.5,732 M47.5,731 L47.5,732 M55.5,731 L55.5,732 M63.5,731 L63.5,732 M71.5,731 L71.5,732 M79.5,731 L79.5,732 M87.5,731 L87.5,732 M95.5,731 L95.5,732 M103.5,731 L103.5,732 M111.5,731 L111.5,732 M119.5,731 L119.5,732 M127.5,731 L127.5,732 M135.5,731 L135.5,732 M143.5,731 L143.5,732 M151.5,731 L151.5,732 M159.5,731 L159.5,732 M167.5,731 L167.5,732 M175.5,731 L175.5,732 M183.5,731 L183.5,732 M191.5,731 L191.5,732 M199.5,731 L199.5,732 M207.5,731 L207.5,732 M215.5,731 L215.5,732 M223.5,731 L223.5,732 M231.5,731 L231.5,732 M239.5,731 L239.5,732 M247.5,731 L247.5,732 M255.5,731 L255.5,732 M263.5,731 L263.5,732 M271.5,731 L271.5,732 M279.5,731 L279.5,732 M287.5,731 L287.5,732 M295.5,731 L295.5,732 M303.5,731 L303.5,732 M311.5,731 L311.5,732 M319.5,731 L319.5,732 M327.5,731 L327.5,732 M335.5,731 L335.5,732 M343.5,731 L343.5,732 M351.5,731 L351.5,732 M359.5,731 L359.5,732 M367.5,731 L367.5,732 M375.5,731 L375.5,732 M383.5,731 L383.5,732 M391.5,731 L391.5,732 M399.5,731 L399.5,732 M407.5,731 L407.5,732 M415.5,731 L415.5,732 M423.5,731 L423.5,732 M431.5,731 L431.5,732 M439.5,731 L439.5,732 M447.5,731 L447.5,732 M455.5,731 L455.5,732 M463.5,731 L463.5,732 M471.5,731 L471.5,732 M479.5,731 L479.5,732 M487.5,731 L487.5,732 M495.5,731 L495.5,732 M503.5,731 L503.5,732 M511.5,731 L511.5,732 M519.5,731 L519.5,732 M527.5,731 L527.5,732 M535.5,731 L535.5,732 M543.5,731 L543.5,732 M551.5,731 L551.5,732 M559.5,731 L559.5,732 M567.5,731 L567.5,732 M575.5,731 L575.5,732 M583.5,731 L583.5,732 M591.5,731 L591.5,732 M599.5,731 L599.5,732 M607.5,731 L607.5,732 M615.5,731 L615.5,732 M623.5,731 L623.5,732 M631.5,731 L631.5,732 M639.5,731 L639.5,732 M647.5,731 L647.5,732 M655.5,731 L655.5,732 M663.5,731 L663.5,732 M671.5,731 L671.5,732 M679.5,731 L679.5,732 M687.5,731 L687.5,732 M695.5,731 L695.5,732 M703.5,731 L703.5,732 M711.5,731 L711.5,732 M719.5,731 L719.5,732 M727.5,731 L727.5,732 M735.5,731 L735.5,732 M743.5,731 L743.5,732 M751.5,731 L751.5,732 M759.5,731 L759.5,732 M767.5,731 L767.5,732 M775.5,731 L775.5,732 M783.5,731 L783.5,732 M791.5,731 L791.5,732 M799.5,731 L799.5,732 M807.5,731 L807.5,732 M815.5,731 L815.5,732 M823.5,731 L823.5,732 M831.5,731 L831.5,732 M839.5,731 L839.5,732 M847.5,731 L847.5,732 M855.5,731 L855.5,732 M863.5,731 L863.5,732 M871.5,731 L871.5,732 M879.5,731 L879.5,732 M887.5,731 L887.5,732 M895.5,731 L895.5,732 M903.5,731 L903.5,732 M911.5,731 L911.5,732 M919.5,731 L919.5,732 M927.5,731 L927.5,732 M935.5,731 L935.5,732 M943.5,731 L943.5,732 M951.5,731 L951.5,732 M959.5,731 L959.5,732 M967.5,731 L967.5,732 M975.5,731 L975.5,732 M983.5,731 L983.5,732 M991.5,731 L991.5,732 M999.5,731 L999.5,732 M1007.5,731 L1007.5,732 M1015.5,731 L1015.5,732 " stroke="#E2D4CE" stroke-width="1"/>
<text x="6" y="298" font-family="Liberation Sans" font-size="10" font-weight="normal" font-style="italic" fill="#B4CCCC" text-anchor="start" letter-spacing="0.2">5 этаж</text>
<text x="6" y="393" font-family="Liberation Sans" font-size="10" font-weight="normal" font-style="italic" fill="#B4CCCC" text-anchor="start" letter-spacing="0.2">4 этаж</text>
<text x="6" y="474" font-family="Liberation Sans" font-size="10" font-weight="normal" font-style="italic" fill="#B4CCCC" text-anchor="start" letter-spacing="0.2">3 этаж</text>
<text x="6" y="601" font-family="Liberation Sans" font-size="10" font-weight="normal" font-style="italic" fill="#B4CCCC" text-anchor="start" letter-spacing="0.2">2 этаж</text>
<text x="6" y="725" font-family="Liberation Sans" font-size="10" font-weight="normal" font-style="italic" fill="#B4CCCC" text-anchor="start" letter-spacing="0.2">1 этаж</text>
<rect x="389" y="308" width="39" height="229" fill="#52C4C4"/>
<path d="M389,308 L398,301 L437,301 L428,308 Z" fill="#429C9C"/>
<path d="M428,308 L437,301 L437,530 L428,537 Z" fill="#5EDEDE"/>
<path d="M389,537 L428,537 L408.5,544 Z" fill="#46A6A6"/>
<rect x="406" y="326" width="8" height="6" fill="#000"/><rect x="407" y="327" width="6" height="4" fill="#00FFFF"/>
<rect x="406" y="423" width="8" height="6" fill="#000"/><rect x="407" y="424" width="6" height="4" fill="#00FFFF"/>
<rect x="406" y="508" width="8" height="6" fill="#000"/><rect x="407" y="509" width="6" height="4" fill="#00FFFF"/>
<rect x="394.0" y="390" width="29" height="11" fill="#ECE6D8"/>
<rect x="394.0" y="390" width="29" height="1" fill="#A89C90"/><rect x="394.0" y="390" width="1" height="11" fill="#A89C90"/>
<text x="408.5" y="399" font-family="Liberation Sans" font-size="10" font-weight="normal" font-style="normal" fill="#000" text-anchor="middle">Б-2</text>
<rect x="432" y="308" width="39" height="229" fill="#52C4C4"/>
<path d="M432,308 L441,301 L480,301 L471,308 Z" fill="#429C9C"/>
<path d="M471,308 L480,301 L480,530 L471,537 Z" fill="#5EDEDE"/>
<path d="M432,537 L471,537 L451.5,544 Z" fill="#46A6A6"/>
<rect x="449" y="326" width="8" height="6" fill="#000"/><rect x="450" y="327" width="6" height="4" fill="#00FFFF"/>
<rect x="449" y="423" width="8" height="6" fill="#000"/><rect x="450" y="424" width="6" height="4" fill="#00FFFF"/>
<rect x="449" y="508" width="8" height="6" fill="#000"/><rect x="450" y="509" width="6" height="4" fill="#00FFFF"/>
<rect x="437.0" y="390" width="29" height="11" fill="#ECE6D8"/>
<rect x="437.0" y="390" width="29" height="1" fill="#A89C90"/><rect x="437.0" y="390" width="1" height="11" fill="#A89C90"/>
<text x="451.5" y="399" font-family="Liberation Sans" font-size="10" font-weight="normal" font-style="normal" fill="#000" text-anchor="middle">Б-4</text>
<rect x="475" y="308" width="39" height="229" fill="#52C4C4"/>
<path d="M475,308 L484,301 L523,301 L514,308 Z" fill="#429C9C"/>
<path d="M514,308 L523,301 L523,530 L514,537 Z" fill="#5EDEDE"/>
<path d="M475,537 L514,537 L494.5,544 Z" fill="#46A6A6"/>
<rect x="492" y="326" width="8" height="6" fill="#000"/><rect x="493" y="327" width="6" height="4" fill="#00FFFF"/>
<rect x="492" y="423" width="8" height="6" fill="#000"/><rect x="493" y="424" width="6" height="4" fill="#00FFFF"/>
<rect x="492" y="508" width="8" height="6" fill="#000"/><rect x="493" y="509" width="6" height="4" fill="#00FFFF"/>
<rect x="480.0" y="390" width="29" height="11" fill="#ECE6D8"/>
<rect x="480.0" y="390" width="29" height="1" fill="#A89C90"/><rect x="480.0" y="390" width="1" height="11" fill="#A89C90"/>
<text x="494.5" y="399" font-family="Liberation Sans" font-size="10" font-weight="normal" font-style="normal" fill="#000" text-anchor="middle">Б-5</text>
<rect x="518" y="308" width="39" height="229" fill="#52C4C4"/>
<path d="M518,308 L527,301 L566,301 L557,308 Z" fill="#429C9C"/>
<path d="M557,308 L566,301 L566,530 L557,537 Z" fill="#5EDEDE"/>
<path d="M518,537 L557,537 L537.5,544 Z" fill="#46A6A6"/>
<rect x="535" y="326" width="8" height="6" fill="#000"/><rect x="536" y="327" width="6" height="4" fill="#00FFFF"/>
<rect x="535" y="423" width="8" height="6" fill="#000"/><rect x="536" y="424" width="6" height="4" fill="#00FFFF"/>
<rect x="535" y="508" width="8" height="6" fill="#000"/><rect x="536" y="509" width="6" height="4" fill="#00FFFF"/>
<rect x="523.0" y="390" width="29" height="11" fill="#ECE6D8"/>
<rect x="523.0" y="390" width="29" height="1" fill="#A89C90"/><rect x="523.0" y="390" width="1" height="11" fill="#A89C90"/>
<text x="537.5" y="399" font-family="Liberation Sans" font-size="10" font-weight="normal" font-style="normal" fill="#000" text-anchor="middle">Б-6</text>
<rect x="561" y="308" width="39" height="229" fill="#52C4C4"/>
<path d="M561,308 L570,301 L609,301 L600,308 Z" fill="#429C9C"/>
<path d="M600,308 L609,301 L609,530 L600,537 Z" fill="#5EDEDE"/>
<path d="M561,537 L600,537 L580.5,544 Z" fill="#46A6A6"/>
<rect x="578" y="326" width="8" height="6" fill="#000"/><rect x="579" y="327" width="6" height="4" fill="#00FFFF"/>
<rect x="578" y="423" width="8" height="6" fill="#000"/><rect x="579" y="424" width="6" height="4" fill="#00FFFF"/>
<rect x="578" y="508" width="8" height="6" fill="#000"/><rect x="579" y="509" width="6" height="4" fill="#00FFFF"/>
<rect x="566.0" y="390" width="29" height="11" fill="#ECE6D8"/>
<rect x="566.0" y="390" width="29" height="1" fill="#A89C90"/><rect x="566.0" y="390" width="1" height="11" fill="#A89C90"/>
<text x="580.5" y="399" font-family="Liberation Sans" font-size="10" font-weight="normal" font-style="normal" fill="#000" text-anchor="middle">Б-7</text>
<rect x="604" y="308" width="39" height="229" fill="#52C4C4"/>
<path d="M604,308 L613,301 L652,301 L643,308 Z" fill="#429C9C"/>
<path d="M643,308 L652,301 L652,530 L643,537 Z" fill="#5EDEDE"/>
<path d="M604,537 L643,537 L623.5,544 Z" fill="#46A6A6"/>
<rect x="621" y="326" width="8" height="6" fill="#000"/><rect x="622" y="327" width="6" height="4" fill="#00FFFF"/>
<rect x="621" y="423" width="8" height="6" fill="#000"/><rect x="622" y="424" width="6" height="4" fill="#00FFFF"/>
<rect x="621" y="508" width="8" height="6" fill="#000"/><rect x="622" y="509" width="6" height="4" fill="#00FFFF"/>
<rect x="609.0" y="390" width="29" height="11" fill="#ECE6D8"/>
<rect x="609.0" y="390" width="29" height="1" fill="#A89C90"/><rect x="609.0" y="390" width="1" height="11" fill="#A89C90"/>
<text x="623.5" y="399" font-family="Liberation Sans" font-size="10" font-weight="normal" font-style="normal" fill="#000" text-anchor="middle">Б-8</text>
<rect x="647" y="308" width="39" height="229" fill="#52C4C4"/>
<path d="M647,308 L656,301 L695,301 L686,308 Z" fill="#429C9C"/>
<path d="M686,308 L695,301 L695,530 L686,537 Z" fill="#5EDEDE"/>
<path d="M647,537 L686,537 L666.5,544 Z" fill="#46A6A6"/>
<rect x="664" y="326" width="8" height="6" fill="#000"/><rect x="665" y="327" width="6" height="4" fill="#00FFFF"/>
<rect x="664" y="423" width="8" height="6" fill="#000"/><rect x="665" y="424" width="6" height="4" fill="#00FFFF"/>
<rect x="664" y="508" width="8" height="6" fill="#000"/><rect x="665" y="509" width="6" height="4" fill="#00FFFF"/>
<rect x="652.0" y="390" width="29" height="11" fill="#ECE6D8"/>
<rect x="652.0" y="390" width="29" height="1" fill="#A89C90"/><rect x="652.0" y="390" width="1" height="11" fill="#A89C90"/>
<text x="666.5" y="399" font-family="Liberation Sans" font-size="10" font-weight="normal" font-style="normal" fill="#000" text-anchor="middle">Б-9</text>
<rect x="690" y="308" width="39" height="229" fill="#52C4C4"/>
<path d="M690,308 L699,301 L738,301 L729,308 Z" fill="#429C9C"/>
<path d="M729,308 L738,301 L738,530 L729,537 Z" fill="#5EDEDE"/>
<path d="M690,537 L729,537 L709.5,544 Z" fill="#46A6A6"/>
<rect x="707" y="326" width="8" height="6" fill="#000"/><rect x="708" y="327" width="6" height="4" fill="#00FFFF"/>
<rect x="707" y="423" width="8" height="6" fill="#000"/><rect x="708" y="424" width="6" height="4" fill="#00FFFF"/>
<rect x="707" y="508" width="8" height="6" fill="#000"/><rect x="708" y="509" width="6" height="4" fill="#00FFFF"/>
<rect x="695.0" y="390" width="29" height="11" fill="#ECE6D8"/>
<rect x="695.0" y="390" width="29" height="1" fill="#A89C90"/><rect x="695.0" y="390" width="1" height="11" fill="#A89C90"/>
<text x="709.5" y="399" font-family="Liberation Sans" font-size="10" font-weight="normal" font-style="normal" fill="#000" text-anchor="middle">Б-12</text>
<rect x="838" y="308" width="39" height="227" fill="#52C4C4"/>
<path d="M838,308 L847,301 L886,301 L877,308 Z" fill="#429C9C"/>
<path d="M877,308 L886,301 L886,528 L877,535 Z" fill="#5EDEDE"/>
<path d="M838,535 L877,535 L857.5,542 Z" fill="#46A6A6"/>
<rect x="855" y="326" width="8" height="6" fill="#000"/><rect x="856" y="327" width="6" height="4" fill="#00FFFF"/>
<rect x="855" y="524" width="8" height="6" fill="#000"/><rect x="856" y="525" width="6" height="4" fill="#00FFFF"/>
<rect x="843.0" y="390" width="29" height="11" fill="#ECE6D8"/>
<rect x="843.0" y="390" width="29" height="1" fill="#A89C90"/><rect x="843.0" y="390" width="1" height="11" fill="#A89C90"/>
<text x="857.5" y="399" font-family="Liberation Sans" font-size="10" font-weight="normal" font-style="normal" fill="#000" text-anchor="middle">Б-33</text>
<rect x="881" y="308" width="39" height="227" fill="#52C4C4"/>
<path d="M881,308 L890,301 L929,301 L920,308 Z" fill="#429C9C"/>
<path d="M920,308 L929,301 L929,528 L920,535 Z" fill="#5EDEDE"/>
<path d="M881,535 L920,535 L900.5,542 Z" fill="#46A6A6"/>
<rect x="898" y="326" width="8" height="6" fill="#000"/><rect x="899" y="327" width="6" height="4" fill="#00FFFF"/>
<rect x="898" y="524" width="8" height="6" fill="#000"/><rect x="899" y="525" width="6" height="4" fill="#00FFFF"/>
<rect x="886.0" y="390" width="29" height="11" fill="#ECE6D8"/>
<rect x="886.0" y="390" width="29" height="1" fill="#A89C90"/><rect x="886.0" y="390" width="1" height="11" fill="#A89C90"/>
<text x="900.5" y="399" font-family="Liberation Sans" font-size="10" font-weight="normal" font-style="normal" fill="#000" text-anchor="middle">Б-34</text>
<rect x="924" y="308" width="39" height="227" fill="#52C4C4"/>
<path d="M924,308 L933,301 L972,301 L963,308 Z" fill="#429C9C"/>
<path d="M963,308 L972,301 L972,528 L963,535 Z" fill="#5EDEDE"/>
<path d="M924,535 L963,535 L943.5,542 Z" fill="#46A6A6"/>
<rect x="941" y="326" width="8" height="6" fill="#000"/><rect x="942" y="327" width="6" height="4" fill="#00FFFF"/>
<rect x="941" y="524" width="8" height="6" fill="#000"/><rect x="942" y="525" width="6" height="4" fill="#00FFFF"/>
<rect x="929.0" y="390" width="29" height="11" fill="#ECE6D8"/>
<rect x="929.0" y="390" width="29" height="1" fill="#A89C90"/><rect x="929.0" y="390" width="1" height="11" fill="#A89C90"/>
<text x="943.5" y="399" font-family="Liberation Sans" font-size="10" font-weight="normal" font-style="normal" fill="#000" text-anchor="middle">Б-35</text>
<rect x="967" y="308" width="39" height="227" fill="#52C4C4"/>
<path d="M967,308 L976,301 L1015,301 L1006,308 Z" fill="#429C9C"/>
<path d="M1006,308 L1015,301 L1015,528 L1006,535 Z" fill="#5EDEDE"/>
<path d="M967,535 L1006,535 L986.5,542 Z" fill="#46A6A6"/>
<rect x="984" y="326" width="8" height="6" fill="#000"/><rect x="985" y="327" width="6" height="4" fill="#00FFFF"/>
<rect x="984" y="524" width="8" height="6" fill="#000"/><rect x="985" y="525" width="6" height="4" fill="#00FFFF"/>
<rect x="972.0" y="390" width="29" height="11" fill="#ECE6D8"/>
<rect x="972.0" y="390" width="29" height="1" fill="#A89C90"/><rect x="972.0" y="390" width="1" height="11" fill="#A89C90"/>
<text x="986.5" y="399" font-family="Liberation Sans" font-size="10" font-weight="normal" font-style="normal" fill="#000" text-anchor="middle">Б-36</text>
<rect x="423" y="146" width="1" height="142" fill="#FFFFFF"/>
<rect x="423" y="295" width="1" height="6" fill="#FFFFFF"/>
<rect x="421" y="287" width="5" height="1" fill="#000"/><rect x="419" y="288" width="9" height="1" fill="#000"/><rect x="421" y="288" width="5" height="1" fill="#00FFFF"/><rect x="419" y="289" width="9" height="1" fill="#000"/><rect x="420" y="289" width="7" height="1" fill="#00FFFF"/><rect x="418" y="290" width="11" height="1" fill="#000"/><rect x="419" y="290" width="9" height="1" fill="#00FFFF"/><rect x="419" y="291" width="9" height="1" fill="#000"/><rect x="420" y="291" width="7" height="1" fill="#00FFFF"/><rect x="419" y="292" width="9" height="1" fill="#000"/><rect x="421" y="292" width="5" height="1" fill="#00FFFF"/><rect x="421" y="293" width="5" height="1" fill="#000"/>
<rect x="455" y="236" width="1" height="52" fill="#FFFFFF"/>
<rect x="455" y="295" width="1" height="6" fill="#FFFFFF"/>
<rect x="453" y="287" width="5" height="1" fill="#000"/><rect x="451" y="288" width="9" height="1" fill="#000"/><rect x="453" y="288" width="5" height="1" fill="#00FFFF"/><rect x="451" y="289" width="9" height="1" fill="#000"/><rect x="452" y="289" width="7" height="1" fill="#00FFFF"/><rect x="450" y="290" width="11" height="1" fill="#000"/><rect x="451" y="290" width="9" height="1" fill="#00FFFF"/><rect x="451" y="291" width="9" height="1" fill="#000"/><rect x="452" y="291" width="7" height="1" fill="#00FFFF"/><rect x="451" y="292" width="9" height="1" fill="#000"/><rect x="453" y="292" width="5" height="1" fill="#00FFFF"/><rect x="453" y="293" width="5" height="1" fill="#000"/>
<rect x="490" y="139" width="1" height="149" fill="#FFFFFF"/>
<rect x="490" y="295" width="1" height="6" fill="#FFFFFF"/>
<rect x="488" y="287" width="5" height="1" fill="#000"/><rect x="486" y="288" width="9" height="1" fill="#000"/><rect x="488" y="288" width="5" height="1" fill="#00FFFF"/><rect x="486" y="289" width="9" height="1" fill="#000"/><rect x="487" y="289" width="7" height="1" fill="#00FFFF"/><rect x="485" y="290" width="11" height="1" fill="#000"/><rect x="486" y="290" width="9" height="1" fill="#00FFFF"/><rect x="486" y="291" width="9" height="1" fill="#000"/><rect x="487" y="291" width="7" height="1" fill="#00FFFF"/><rect x="486" y="292" width="9" height="1" fill="#000"/><rect x="488" y="292" width="5" height="1" fill="#00FFFF"/><rect x="488" y="293" width="5" height="1" fill="#000"/>
<rect x="504" y="186" width="1" height="102" fill="#FFFFFF"/>
<rect x="504" y="295" width="1" height="6" fill="#FFFFFF"/>
<rect x="502" y="287" width="5" height="1" fill="#000"/><rect x="500" y="288" width="9" height="1" fill="#000"/><rect x="502" y="288" width="5" height="1" fill="#00FFFF"/><rect x="500" y="289" width="9" height="1" fill="#000"/><rect x="501" y="289" width="7" height="1" fill="#00FFFF"/><rect x="499" y="290" width="11" height="1" fill="#000"/><rect x="500" y="290" width="9" height="1" fill="#00FFFF"/><rect x="500" y="291" width="9" height="1" fill="#000"/><rect x="501" y="291" width="7" height="1" fill="#00FFFF"/><rect x="500" y="292" width="9" height="1" fill="#000"/><rect x="502" y="292" width="5" height="1" fill="#00FFFF"/><rect x="502" y="293" width="5" height="1" fill="#000"/>
<rect x="543" y="206" width="1" height="82" fill="#FFFFFF"/>
<rect x="543" y="295" width="1" height="6" fill="#FFFFFF"/>
<rect x="541" y="287" width="5" height="1" fill="#000"/><rect x="539" y="288" width="9" height="1" fill="#000"/><rect x="541" y="288" width="5" height="1" fill="#00FFFF"/><rect x="539" y="289" width="9" height="1" fill="#000"/><rect x="540" y="289" width="7" height="1" fill="#00FFFF"/><rect x="538" y="290" width="11" height="1" fill="#000"/><rect x="539" y="290" width="9" height="1" fill="#00FFFF"/><rect x="539" y="291" width="9" height="1" fill="#000"/><rect x="540" y="291" width="7" height="1" fill="#00FFFF"/><rect x="539" y="292" width="9" height="1" fill="#000"/><rect x="541" y="292" width="5" height="1" fill="#00FFFF"/><rect x="541" y="293" width="5" height="1" fill="#000"/>
<rect x="576" y="251" width="1" height="37" fill="#FFFFFF"/>
<rect x="576" y="295" width="1" height="6" fill="#FFFFFF"/>
<rect x="574" y="287" width="5" height="1" fill="#000"/><rect x="572" y="288" width="9" height="1" fill="#000"/><rect x="574" y="288" width="5" height="1" fill="#00FFFF"/><rect x="572" y="289" width="9" height="1" fill="#000"/><rect x="573" y="289" width="7" height="1" fill="#00FFFF"/><rect x="571" y="290" width="11" height="1" fill="#000"/><rect x="572" y="290" width="9" height="1" fill="#00FFFF"/><rect x="572" y="291" width="9" height="1" fill="#000"/><rect x="573" y="291" width="7" height="1" fill="#00FFFF"/><rect x="572" y="292" width="9" height="1" fill="#000"/><rect x="574" y="292" width="5" height="1" fill="#00FFFF"/><rect x="574" y="293" width="5" height="1" fill="#000"/>
<rect x="593" y="99" width="1" height="189" fill="#FFFFFF"/>
<rect x="593" y="295" width="1" height="6" fill="#FFFFFF"/>
<rect x="591" y="287" width="5" height="1" fill="#000"/><rect x="589" y="288" width="9" height="1" fill="#000"/><rect x="591" y="288" width="5" height="1" fill="#00FFFF"/><rect x="589" y="289" width="9" height="1" fill="#000"/><rect x="590" y="289" width="7" height="1" fill="#00FFFF"/><rect x="588" y="290" width="11" height="1" fill="#000"/><rect x="589" y="290" width="9" height="1" fill="#00FFFF"/><rect x="589" y="291" width="9" height="1" fill="#000"/><rect x="590" y="291" width="7" height="1" fill="#00FFFF"/><rect x="589" y="292" width="9" height="1" fill="#000"/><rect x="591" y="292" width="5" height="1" fill="#00FFFF"/><rect x="591" y="293" width="5" height="1" fill="#000"/>
<rect x="619" y="167" width="1" height="121" fill="#FFFFFF"/>
<rect x="619" y="295" width="1" height="6" fill="#FFFFFF"/>
<rect x="617" y="287" width="5" height="1" fill="#000"/><rect x="615" y="288" width="9" height="1" fill="#000"/><rect x="617" y="288" width="5" height="1" fill="#00FFFF"/><rect x="615" y="289" width="9" height="1" fill="#000"/><rect x="616" y="289" width="7" height="1" fill="#00FFFF"/><rect x="614" y="290" width="11" height="1" fill="#000"/><rect x="615" y="290" width="9" height="1" fill="#00FFFF"/><rect x="615" y="291" width="9" height="1" fill="#000"/><rect x="616" y="291" width="7" height="1" fill="#00FFFF"/><rect x="615" y="292" width="9" height="1" fill="#000"/><rect x="617" y="292" width="5" height="1" fill="#00FFFF"/><rect x="617" y="293" width="5" height="1" fill="#000"/>
<rect x="633" y="226" width="1" height="62" fill="#FFFFFF"/>
<rect x="633" y="295" width="1" height="6" fill="#FFFFFF"/>
<rect x="631" y="287" width="5" height="1" fill="#000"/><rect x="629" y="288" width="9" height="1" fill="#000"/><rect x="631" y="288" width="5" height="1" fill="#00FFFF"/><rect x="629" y="289" width="9" height="1" fill="#000"/><rect x="630" y="289" width="7" height="1" fill="#00FFFF"/><rect x="628" y="290" width="11" height="1" fill="#000"/><rect x="629" y="290" width="9" height="1" fill="#00FFFF"/><rect x="629" y="291" width="9" height="1" fill="#000"/><rect x="630" y="291" width="7" height="1" fill="#00FFFF"/><rect x="629" y="292" width="9" height="1" fill="#000"/><rect x="631" y="292" width="5" height="1" fill="#00FFFF"/><rect x="631" y="293" width="5" height="1" fill="#000"/>
<rect x="671" y="119" width="1" height="169" fill="#FFFFFF"/>
<rect x="671" y="295" width="1" height="6" fill="#FFFFFF"/>
<rect x="669" y="287" width="5" height="1" fill="#000"/><rect x="667" y="288" width="9" height="1" fill="#000"/><rect x="669" y="288" width="5" height="1" fill="#00FFFF"/><rect x="667" y="289" width="9" height="1" fill="#000"/><rect x="668" y="289" width="7" height="1" fill="#00FFFF"/><rect x="666" y="290" width="11" height="1" fill="#000"/><rect x="667" y="290" width="9" height="1" fill="#00FFFF"/><rect x="667" y="291" width="9" height="1" fill="#000"/><rect x="668" y="291" width="7" height="1" fill="#00FFFF"/><rect x="667" y="292" width="9" height="1" fill="#000"/><rect x="669" y="292" width="5" height="1" fill="#00FFFF"/><rect x="669" y="293" width="5" height="1" fill="#000"/>
<rect x="715" y="186" width="1" height="102" fill="#FFFFFF"/>
<rect x="715" y="295" width="1" height="6" fill="#FFFFFF"/>
<rect x="713" y="287" width="5" height="1" fill="#000"/><rect x="711" y="288" width="9" height="1" fill="#000"/><rect x="713" y="288" width="5" height="1" fill="#00FFFF"/><rect x="711" y="289" width="9" height="1" fill="#000"/><rect x="712" y="289" width="7" height="1" fill="#00FFFF"/><rect x="710" y="290" width="11" height="1" fill="#000"/><rect x="711" y="290" width="9" height="1" fill="#00FFFF"/><rect x="711" y="291" width="9" height="1" fill="#000"/><rect x="712" y="291" width="7" height="1" fill="#00FFFF"/><rect x="711" y="292" width="9" height="1" fill="#000"/><rect x="713" y="292" width="5" height="1" fill="#00FFFF"/><rect x="713" y="293" width="5" height="1" fill="#000"/>
<rect x="387" y="99" width="207" height="1" fill="#FFFFFF"/>
<rect x="387" y="119" width="203" height="1" fill="#FFFFFF"/>
<rect x="597" y="119" width="75" height="1" fill="#FFFFFF"/>
<rect x="387" y="139" width="104" height="1" fill="#FFFFFF"/>
<rect x="423" y="146" width="64" height="1" fill="#FFFFFF"/>
<rect x="494" y="146" width="96" height="1" fill="#FFFFFF"/>
<rect x="597" y="146" width="71" height="1" fill="#FFFFFF"/>
<rect x="675" y="146" width="61" height="1" fill="#FFFFFF"/>
<rect x="387" y="167" width="33" height="1" fill="#FFFFFF"/>
<rect x="427" y="167" width="60" height="1" fill="#FFFFFF"/>
<rect x="494" y="167" width="96" height="1" fill="#FFFFFF"/>
<rect x="597" y="167" width="23" height="1" fill="#FFFFFF"/>
<rect x="504" y="186" width="86" height="1" fill="#FFFFFF"/>
<rect x="597" y="186" width="19" height="1" fill="#FFFFFF"/>
<rect x="623" y="186" width="45" height="1" fill="#FFFFFF"/>
<rect x="675" y="186" width="18" height="1" fill="#FFFFFF"/>
<rect x="692" y="166" width="1" height="21" fill="#FFFFFF"/>
<rect x="692" y="166" width="44" height="1" fill="#FFFFFF"/>
<rect x="715" y="186" width="21" height="1" fill="#FFFFFF"/>
<rect x="543" y="206" width="47" height="1" fill="#FFFFFF"/>
<rect x="597" y="206" width="19" height="1" fill="#FFFFFF"/>
<rect x="623" y="206" width="45" height="1" fill="#FFFFFF"/>
<rect x="675" y="206" width="37" height="1" fill="#FFFFFF"/>
<rect x="719" y="206" width="17" height="1" fill="#FFFFFF"/>
<rect x="633" y="226" width="35" height="1" fill="#FFFFFF"/>
<rect x="675" y="226" width="37" height="1" fill="#FFFFFF"/>
<rect x="719" y="226" width="17" height="1" fill="#FFFFFF"/>
<rect x="387" y="236" width="33" height="1" fill="#FFFFFF"/>
<rect x="427" y="236" width="29" height="1" fill="#FFFFFF"/>
<rect x="576" y="251" width="14" height="1" fill="#FFFFFF"/>
<rect x="597" y="251" width="19" height="1" fill="#FFFFFF"/>
<rect x="623" y="251" width="7" height="1" fill="#FFFFFF"/>
<rect x="637" y="251" width="31" height="1" fill="#FFFFFF"/>
<rect x="675" y="251" width="37" height="1" fill="#FFFFFF"/>
<rect x="719" y="251" width="17" height="1" fill="#FFFFFF"/>
<rect x="387" y="193" width="18" height="1" fill="#FFFFFF"/>
<rect x="404" y="193" width="1" height="8" fill="#FFFFFF"/>
<text x="382" y="211" font-family="Liberation Sans" font-size="10" font-weight="normal" font-style="normal" fill="#FFFFFF" text-anchor="start" letter-spacing="0.6">проход</text>
<rect x="346" y="88" width="35" height="1" fill="#FFFFFF"/>
<rect x="380" y="88" width="1" height="155" fill="#FFFFFF"/>
<rect x="380" y="98" width="1" height="8" fill="#1A9A9A"/>
<rect x="382" y="99" width="5" height="1" fill="#1A9A9A"/>
<g fill="#FFFF00"><rect x="379" y="94" width="3" height="1"/><rect x="379" y="95" width="3" height="1"/><rect x="379" y="96" width="3" height="1"/><rect x="379" y="97" width="3" height="1"/><rect x="379" y="98" width="3" height="1"/><rect x="379" y="99" width="4" height="1"/><rect x="380" y="100" width="4" height="1"/><rect x="381" y="101" width="4" height="1"/><rect x="382" y="102" width="5" height="1"/><rect x="383" y="103" width="4" height="1"/><rect x="384" y="104" width="3" height="1"/></g>
<text x="347" y="105" font-family="Liberation Sans" font-size="13" font-weight="bold" font-style="normal" fill="#FFFFFF" text-anchor="start" letter-spacing="1.5">835</text>
<rect x="380" y="118" width="1" height="8" fill="#1A9A9A"/>
<rect x="382" y="119" width="5" height="1" fill="#1A9A9A"/>
<g fill="#FFFF00"><rect x="379" y="114" width="3" height="1"/><rect x="379" y="115" width="3" height="1"/><rect x="379" y="116" width="3" height="1"/><rect x="379" y="117" width="3" height="1"/><rect x="379" y="118" width="3" height="1"/><rect x="379" y="119" width="4" height="1"/><rect x="380" y="120" width="4" height="1"/><rect x="381" y="121" width="4" height="1"/><rect x="382" y="122" width="5" height="1"/><rect x="383" y="123" width="4" height="1"/><rect x="384" y="124" width="3" height="1"/></g>
<text x="347" y="125" font-family="Liberation Sans" font-size="13" font-weight="bold" font-style="normal" fill="#FFFFFF" text-anchor="start" letter-spacing="1.5">836</text>
<rect x="380" y="138" width="1" height="8" fill="#1A9A9A"/>
<rect x="382" y="139" width="5" height="1" fill="#1A9A9A"/>
<g fill="#FFFF00"><rect x="379" y="134" width="3" height="1"/><rect x="379" y="135" width="3" height="1"/><rect x="379" y="136" width="3" height="1"/><rect x="379" y="137" width="3" height="1"/><rect x="379" y="138" width="3" height="1"/><rect x="379" y="139" width="4" height="1"/><rect x="380" y="140" width="4" height="1"/><rect x="381" y="141" width="4" height="1"/><rect x="382" y="142" width="5" height="1"/><rect x="383" y="143" width="4" height="1"/><rect x="384" y="144" width="3" height="1"/></g>
<text x="347" y="145" font-family="Liberation Sans" font-size="13" font-weight="bold" font-style="normal" fill="#FFFFFF" text-anchor="start" letter-spacing="1.5">837</text>
<rect x="380" y="166" width="1" height="8" fill="#1A9A9A"/>
<rect x="382" y="167" width="5" height="1" fill="#1A9A9A"/>
<g fill="#FFFF00"><rect x="379" y="162" width="3" height="1"/><rect x="379" y="163" width="3" height="1"/><rect x="379" y="164" width="3" height="1"/><rect x="379" y="165" width="3" height="1"/><rect x="379" y="166" width="3" height="1"/><rect x="379" y="167" width="4" height="1"/><rect x="380" y="168" width="4" height="1"/><rect x="381" y="169" width="4" height="1"/><rect x="382" y="170" width="5" height="1"/><rect x="383" y="171" width="4" height="1"/><rect x="384" y="172" width="3" height="1"/></g>
<text x="347" y="173" font-family="Liberation Sans" font-size="13" font-weight="bold" font-style="normal" fill="#FFFFFF" text-anchor="start" letter-spacing="1.5">839</text>
<rect x="380" y="191" width="1" height="8" fill="#1A9A9A"/>
<rect x="382" y="193" width="5" height="1" fill="#1A9A9A"/>
<g fill="#FFFF00"><rect x="379" y="187" width="3" height="1"/><rect x="379" y="188" width="3" height="1"/><rect x="379" y="189" width="3" height="1"/><rect x="379" y="190" width="3" height="1"/><rect x="379" y="191" width="3" height="1"/><rect x="379" y="192" width="4" height="1"/><rect x="380" y="193" width="4" height="1"/><rect x="381" y="194" width="4" height="1"/><rect x="382" y="195" width="5" height="1"/><rect x="383" y="196" width="4" height="1"/><rect x="384" y="197" width="3" height="1"/></g>
<text x="347" y="199" font-family="Liberation Sans" font-size="13" font-weight="bold" font-style="normal" fill="#FFFFFF" text-anchor="start" letter-spacing="1.5">840</text>
<rect x="380" y="235" width="1" height="8" fill="#1A9A9A"/>
<rect x="382" y="236" width="5" height="1" fill="#1A9A9A"/>
<g fill="#FFFF00"><rect x="379" y="231" width="3" height="1"/><rect x="379" y="232" width="3" height="1"/><rect x="379" y="233" width="3" height="1"/><rect x="379" y="234" width="3" height="1"/><rect x="379" y="235" width="3" height="1"/><rect x="379" y="236" width="4" height="1"/><rect x="380" y="237" width="4" height="1"/><rect x="381" y="238" width="4" height="1"/><rect x="382" y="239" width="5" height="1"/><rect x="383" y="240" width="4" height="1"/><rect x="384" y="241" width="3" height="1"/></g>
<text x="347" y="242" font-family="Liberation Sans" font-size="13" font-weight="bold" font-style="normal" fill="#FFFFFF" text-anchor="start" letter-spacing="1.5">838</text>
<rect x="734" y="87" width="8" height="1" fill="#FFFFFF"/>
<rect x="741" y="87" width="1" height="580" fill="#FFFFFF"/>
<rect x="741" y="124" width="1" height="8" fill="#1A9A9A"/>
<g fill="#FFFF00"><rect x="740" y="120" width="3" height="1"/><rect x="740" y="121" width="3" height="1"/><rect x="740" y="122" width="3" height="1"/><rect x="740" y="123" width="3" height="1"/><rect x="740" y="124" width="3" height="1"/><rect x="740" y="125" width="4" height="1"/><rect x="741" y="126" width="4" height="1"/><rect x="742" y="127" width="4" height="1"/><rect x="743" y="128" width="5" height="1"/><rect x="744" y="129" width="4" height="1"/><rect x="745" y="130" width="3" height="1"/></g>
<text x="707" y="131" font-family="Liberation Sans" font-size="13" font-weight="bold" font-style="normal" fill="#FFFFFF" text-anchor="start" letter-spacing="1.5">842</text>
<rect x="748" y="125" width="59" height="1" fill="#FFFFFF"/>
<rect x="806" y="125" width="1" height="84" fill="#FFFFFF"/>
<rect x="741" y="144" width="1" height="8" fill="#1A9A9A"/>
<rect x="736" y="146" width="5" height="1" fill="#1A9A9A"/>
<g fill="#FFFF00"><rect x="740" y="140" width="3" height="1"/><rect x="740" y="141" width="3" height="1"/><rect x="740" y="142" width="3" height="1"/><rect x="740" y="143" width="3" height="1"/><rect x="740" y="144" width="3" height="1"/><rect x="739" y="145" width="4" height="1"/><rect x="738" y="146" width="4" height="1"/><rect x="737" y="147" width="4" height="1"/><rect x="735" y="148" width="5" height="1"/><rect x="735" y="149" width="4" height="1"/><rect x="735" y="150" width="3" height="1"/></g>
<text x="750" y="151" font-family="Liberation Sans" font-size="13" font-weight="bold" font-style="normal" fill="#FFFFFF" text-anchor="start" letter-spacing="1.5">843</text>
<rect x="741" y="164" width="1" height="8" fill="#1A9A9A"/>
<rect x="736" y="166" width="5" height="1" fill="#1A9A9A"/>
<g fill="#FFFF00"><rect x="740" y="160" width="3" height="1"/><rect x="740" y="161" width="3" height="1"/><rect x="740" y="162" width="3" height="1"/><rect x="740" y="163" width="3" height="1"/><rect x="740" y="164" width="3" height="1"/><rect x="739" y="165" width="4" height="1"/><rect x="738" y="166" width="4" height="1"/><rect x="737" y="167" width="4" height="1"/><rect x="735" y="168" width="5" height="1"/><rect x="735" y="169" width="4" height="1"/><rect x="735" y="170" width="3" height="1"/></g>
<text x="750" y="171" font-family="Liberation Sans" font-size="13" font-weight="bold" font-style="normal" fill="#FFFFFF" text-anchor="start" letter-spacing="1.5">844</text>
<rect x="741" y="184" width="1" height="8" fill="#1A9A9A"/>
<rect x="736" y="186" width="5" height="1" fill="#1A9A9A"/>
<g fill="#FFFF00"><rect x="740" y="180" width="3" height="1"/><rect x="740" y="181" width="3" height="1"/><rect x="740" y="182" width="3" height="1"/><rect x="740" y="183" width="3" height="1"/><rect x="740" y="184" width="3" height="1"/><rect x="739" y="185" width="4" height="1"/><rect x="738" y="186" width="4" height="1"/><rect x="737" y="187" width="4" height="1"/><rect x="735" y="188" width="5" height="1"/><rect x="735" y="189" width="4" height="1"/><rect x="735" y="190" width="3" height="1"/></g>
<text x="750" y="191" font-family="Liberation Sans" font-size="13" font-weight="bold" font-style="normal" fill="#FFFFFF" text-anchor="start" letter-spacing="1.5">845</text>
<rect x="741" y="204" width="1" height="8" fill="#1A9A9A"/>
<rect x="736" y="206" width="5" height="1" fill="#1A9A9A"/>
<g fill="#FFFF00"><rect x="740" y="200" width="3" height="1"/><rect x="740" y="201" width="3" height="1"/><rect x="740" y="202" width="3" height="1"/><rect x="740" y="203" width="3" height="1"/><rect x="740" y="204" width="3" height="1"/><rect x="739" y="205" width="4" height="1"/><rect x="738" y="206" width="4" height="1"/><rect x="737" y="207" width="4" height="1"/><rect x="735" y="208" width="5" height="1"/><rect x="735" y="209" width="4" height="1"/><rect x="735" y="210" width="3" height="1"/></g>
<text x="750" y="211" font-family="Liberation Sans" font-size="13" font-weight="bold" font-style="normal" fill="#FFFFFF" text-anchor="start" letter-spacing="1.5">846</text>
<rect x="741" y="224" width="1" height="8" fill="#1A9A9A"/>
<rect x="736" y="226" width="5" height="1" fill="#1A9A9A"/>
<g fill="#FFFF00"><rect x="740" y="220" width="3" height="1"/><rect x="740" y="221" width="3" height="1"/><rect x="740" y="222" width="3" height="1"/><rect x="740" y="223" width="3" height="1"/><rect x="740" y="224" width="3" height="1"/><rect x="739" y="225" width="4" height="1"/><rect x="738" y="226" width="4" height="1"/><rect x="737" y="227" width="4" height="1"/><rect x="735" y="228" width="5" height="1"/><rect x="735" y="229" width="4" height="1"/><rect x="735" y="230" width="3" height="1"/></g>
<text x="750" y="231" font-family="Liberation Sans" font-size="13" font-weight="bold" font-style="normal" fill="#FFFFFF" text-anchor="start" letter-spacing="1.5">847</text>
<rect x="741" y="250" width="1" height="8" fill="#1A9A9A"/>
<rect x="736" y="251" width="5" height="1" fill="#1A9A9A"/>
<g fill="#FFFF00"><rect x="740" y="246" width="3" height="1"/><rect x="740" y="247" width="3" height="1"/><rect x="740" y="248" width="3" height="1"/><rect x="740" y="249" width="3" height="1"/><rect x="740" y="250" width="3" height="1"/><rect x="739" y="251" width="4" height="1"/><rect x="738" y="252" width="4" height="1"/><rect x="737" y="253" width="4" height="1"/><rect x="735" y="254" width="5" height="1"/><rect x="735" y="255" width="4" height="1"/><rect x="735" y="256" width="3" height="1"/></g>
<text x="750" y="256" font-family="Liberation Sans" font-size="13" font-weight="bold" font-style="normal" fill="#FFFFFF" text-anchor="start" letter-spacing="1.5">841</text>
<rect x="741" y="618" width="1" height="8" fill="#1A9A9A"/>
<rect x="736" y="620" width="5" height="1" fill="#1A9A9A"/>
<g fill="#FFFF00"><rect x="740" y="614" width="3" height="1"/><rect x="740" y="615" width="3" height="1"/><rect x="740" y="616" width="3" height="1"/><rect x="740" y="617" width="3" height="1"/><rect x="740" y="618" width="3" height="1"/><rect x="739" y="619" width="4" height="1"/><rect x="738" y="620" width="4" height="1"/><rect x="737" y="621" width="4" height="1"/><rect x="735" y="622" width="5" height="1"/><rect x="735" y="623" width="4" height="1"/><rect x="735" y="624" width="3" height="1"/></g>
<text x="750" y="625" font-family="Liberation Sans" font-size="13" font-weight="bold" font-style="normal" fill="#FFFFFF" text-anchor="start" letter-spacing="1.5">848</text>
<rect x="741" y="638" width="1" height="8" fill="#1A9A9A"/>
<rect x="736" y="640" width="5" height="1" fill="#1A9A9A"/>
<g fill="#FFFF00"><rect x="740" y="634" width="3" height="1"/><rect x="740" y="635" width="3" height="1"/><rect x="740" y="636" width="3" height="1"/><rect x="740" y="637" width="3" height="1"/><rect x="740" y="638" width="3" height="1"/><rect x="739" y="639" width="4" height="1"/><rect x="738" y="640" width="4" height="1"/><rect x="737" y="641" width="4" height="1"/><rect x="735" y="642" width="5" height="1"/><rect x="735" y="643" width="4" height="1"/><rect x="735" y="644" width="3" height="1"/></g>
<text x="750" y="645" font-family="Liberation Sans" font-size="13" font-weight="bold" font-style="normal" fill="#FFFFFF" text-anchor="start" letter-spacing="1.5">849</text>
<rect x="741" y="658" width="1" height="8" fill="#1A9A9A"/>
<rect x="736" y="660" width="5" height="1" fill="#1A9A9A"/>
<g fill="#FFFF00"><rect x="740" y="654" width="3" height="1"/><rect x="740" y="655" width="3" height="1"/><rect x="740" y="656" width="3" height="1"/><rect x="740" y="657" width="3" height="1"/><rect x="740" y="658" width="3" height="1"/><rect x="739" y="659" width="4" height="1"/><rect x="738" y="660" width="4" height="1"/><rect x="737" y="661" width="4" height="1"/><rect x="735" y="662" width="5" height="1"/><rect x="735" y="663" width="4" height="1"/><rect x="735" y="664" width="3" height="1"/></g>
<text x="750" y="665" font-family="Liberation Sans" font-size="13" font-weight="bold" font-style="normal" fill="#FFFFFF" text-anchor="start" letter-spacing="1.5">789</text>
<text x="406.5" y="297" font-family="Liberation Sans" font-size="10" font-weight="normal" font-style="normal" fill="#FFFFFF" text-anchor="start" letter-spacing="0.8">11</text>
<text x="438" y="297" font-family="Liberation Sans" font-size="10" font-weight="normal" font-style="normal" fill="#FFFFFF" text-anchor="start" letter-spacing="0.8">29</text>
<text x="473" y="297" font-family="Liberation Sans" font-size="10" font-weight="normal" font-style="normal" fill="#FFFFFF" text-anchor="start" letter-spacing="0.8">31</text>
<text x="511" y="297" font-family="Liberation Sans" font-size="10" font-weight="normal" font-style="normal" fill="#FFFFFF" text-anchor="start" letter-spacing="0.8">32</text>
<text x="527" y="297" font-family="Liberation Sans" font-size="10" font-weight="normal" font-style="normal" fill="#FFFFFF" text-anchor="start" letter-spacing="0.8">13</text>
<text x="560" y="297" font-family="Liberation Sans" font-size="10" font-weight="normal" font-style="normal" fill="#FFFFFF" text-anchor="start" letter-spacing="0.8">34</text>
<text x="598" y="297" font-family="Liberation Sans" font-size="10" font-weight="normal" font-style="normal" fill="#FFFFFF" text-anchor="start" letter-spacing="0.8">33</text>
<text x="607" y="285" font-family="Liberation Sans" font-size="10" font-weight="normal" font-style="normal" fill="#FFFFFF" text-anchor="start" letter-spacing="0.8">14</text>
<text x="641" y="297" font-family="Liberation Sans" font-size="10" font-weight="normal" font-style="normal" fill="#FFFFFF" text-anchor="start" letter-spacing="0.8">16</text>
<text x="655" y="297" font-family="Liberation Sans" font-size="10" font-weight="normal" font-style="normal" fill="#FFFFFF" text-anchor="start" letter-spacing="0.8">17</text>
<text x="698" y="297" font-family="Liberation Sans" font-size="10" font-weight="normal" font-style="normal" fill="#FFFFFF" text-anchor="start" letter-spacing="0.8">36</text>
<path d="M28.5,65.5 H38.5 L43.5,71.5 V91.5 H35.5 V84.5 H30.5 V91.5 H22.5 V84.5 H17.5 L22.5,78.5 V71.5 Z" fill="#00FFFF" stroke="#000" stroke-width="1"/>
<rect x="30.5" y="77.5" width="6" height="4" fill="#00FFFF" stroke="#000" stroke-width="1"/>
<path d="M22.5,89.5 H30.5 M35.5,89.5 H43.5" stroke="#000" fill="none"/>
<rect x="28" y="92" width="1" height="23" fill="#00FFFF"/>
<rect x="37" y="92" width="1" height="24" fill="#00FFFF"/>
<path d="M28.5,93.5 L23.5,97.0 L28.5,99.5 M28.5,103.5 L23.5,107.5 L28.5,110.5 M26.5,114.5 H28.5 M37.5,93.0 H42.5 L38.0,99.0 M37.5,104.5 L42.5,105.5 L38.0,110.5 M37.5,115.0 H39.5" stroke="#00FFFF" stroke-width="1" fill="none"/>
<text x="54" y="81" font-family="Liberation Sans" font-size="13" font-weight="bold" font-style="normal" fill="#FFFFFF" text-anchor="start" letter-spacing="1.5">504</text>
<path d="M231.5,65.5 H241.5 L246.5,71.5 V91.5 H238.5 V84.5 H233.5 V91.5 H225.5 V84.5 H220.5 L225.5,78.5 V71.5 Z" fill="#00FFFF" stroke="#000" stroke-width="1"/>
<rect x="233.5" y="77.5" width="6" height="4" fill="#00FFFF" stroke="#000" stroke-width="1"/>
<path d="M225.5,89.5 H233.5 M238.5,89.5 H246.5" stroke="#000" fill="none"/>
<rect x="231" y="92" width="1" height="23" fill="#00FFFF"/>
<rect x="240" y="92" width="1" height="24" fill="#00FFFF"/>
<path d="M231.5,93.5 L226.5,97.0 L231.5,99.5 M231.5,103.5 L226.5,107.5 L231.5,110.5 M229.5,114.5 H231.5 M240.5,93.0 H245.5 L241.0,99.0 M240.5,104.5 L245.5,105.5 L241.0,110.5 M240.5,115.0 H242.5" stroke="#00FFFF" stroke-width="1" fill="none"/>
<text x="183" y="81" font-family="Liberation Sans" font-size="13" font-weight="bold" font-style="normal" fill="#FFFFFF" text-anchor="start" letter-spacing="1.5">513</text>
<path d="M327.5,65.5 H337.5 L342.5,71.5 V91.5 H334.5 V84.5 H329.5 V91.5 H321.5 V84.5 H316.5 L321.5,78.5 V71.5 Z" fill="#00FFFF" stroke="#000" stroke-width="1"/>
<rect x="329.5" y="77.5" width="6" height="4" fill="#00FFFF" stroke="#000" stroke-width="1"/>
<path d="M321.5,89.5 H329.5 M334.5,89.5 H342.5" stroke="#000" fill="none"/>
<rect x="327" y="92" width="1" height="23" fill="#00FFFF"/>
<rect x="336" y="92" width="1" height="24" fill="#00FFFF"/>
<path d="M327.5,93.5 L322.5,97.0 L327.5,99.5 M327.5,103.5 L322.5,107.5 L327.5,110.5 M325.5,114.5 H327.5 M336.5,93.0 H341.5 L337.0,99.0 M336.5,104.5 L341.5,105.5 L337.0,110.5 M336.5,115.0 H338.5" stroke="#00FFFF" stroke-width="1" fill="none"/>
<text x="279" y="81" font-family="Liberation Sans" font-size="13" font-weight="bold" font-style="normal" fill="#FFFFFF" text-anchor="start" letter-spacing="1.5">505</text>
<path d="M716.5,65.5 H726.5 L731.5,71.5 V91.5 H723.5 V84.5 H718.5 V91.5 H710.5 V84.5 H705.5 L710.5,78.5 V71.5 Z" fill="#00FFFF" stroke="#000" stroke-width="1"/>
<rect x="718.5" y="77.5" width="6" height="4" fill="#00FFFF" stroke="#000" stroke-width="1"/>
<path d="M710.5,89.5 H718.5 M723.5,89.5 H731.5" stroke="#000" fill="none"/>
<rect x="716" y="92" width="1" height="23" fill="#00FFFF"/>
<rect x="725" y="92" width="1" height="24" fill="#00FFFF"/>
<path d="M716.5,93.5 L711.5,97.0 L716.5,99.5 M716.5,103.5 L711.5,107.5 L716.5,110.5 M714.5,114.5 H716.5 M725.5,93.0 H730.5 L726.0,99.0 M725.5,104.5 L730.5,105.5 L726.0,110.5 M725.5,115.0 H727.5" stroke="#00FFFF" stroke-width="1" fill="none"/>
<text x="668" y="81" font-family="Liberation Sans" font-size="13" font-weight="bold" font-style="normal" fill="#FFFFFF" text-anchor="start" letter-spacing="1.5">501</text>
<rect x="16" y="84" width="1" height="130" fill="#FFFFFF"/>
<rect x="16" y="213" width="50" height="1" fill="#FFFFFF"/>
<rect x="65" y="213" width="1" height="26" fill="#FFFFFF"/>
<rect x="244" y="86" width="5" height="1" fill="#FFFFFF"/>
<rect x="248" y="86" width="1" height="137" fill="#FFFFFF"/>
<rect x="68" y="122" width="155" height="50" fill="#B0A8A0"/>
<rect x="68" y="122" width="154" height="49" fill="#FFFFFF"/>
<rect x="69" y="123" width="153" height="48" fill="#009999"/>
<text x="81" y="138" font-family="Liberation Sans" font-size="12" font-weight="bold" font-style="normal" fill="#FFFFFF" text-anchor="start">Заданная произв-ть:</text>
<rect x="76" y="146" width="33" height="17" fill="#8C7C6C"/>
<rect x="76" y="146" width="32" height="16" fill="#FFFFFF"/>
<rect x="77" y="147" width="31" height="15" fill="#ECE9D8"/>
<text x="92.5" y="158.5" font-family="Liberation Sans" font-size="12" font-weight="bold" font-style="normal" fill="#000" text-anchor="middle">Уст</text>
<rect x="118" y="146" width="57" height="17" fill="#FFFFFF"/>
<rect x="118" y="146" width="56" height="16" fill="#8C7C6C"/>
<rect x="119" y="147" width="55" height="15" fill="#ECE9D8"/>
<text x="172" y="159.0" font-family="Liberation Sans" font-size="13" font-weight="bold" font-style="normal" fill="#000" text-anchor="end">0</text>
<text x="185" y="159" font-family="Liberation Sans" font-size="12" font-weight="bold" font-style="normal" fill="#FFFFFF" text-anchor="start" letter-spacing="1.2">кг/ч</text>
<rect x="68" y="177" width="38" height="15" fill="#000"/>
<rect x="69" y="178" width="36" height="13" fill="#00FFFF"/>
<text x="87" y="188.5" font-family="Liberation Sans" font-size="12" font-weight="bold" font-style="normal" fill="#000" text-anchor="middle">Стоп</text>
<text x="127" y="189" font-family="Liberation Sans" font-size="12" font-weight="bold" font-style="normal" fill="#FFFFFF" text-anchor="start" letter-spacing="0.3">Остан. от весов</text>
<rect x="68" y="195" width="62" height="17" fill="#FFFFFF"/>
<rect x="68" y="195" width="61" height="16" fill="#8C7C6C"/>
<rect x="69" y="196" width="60" height="15" fill="#ECE9D8"/>
<text x="127" y="208.0" font-family="Liberation Sans" font-size="13" font-weight="bold" font-style="normal" fill="#000" text-anchor="end">0</text>
<text x="130" y="206" font-family="Liberation Sans" font-size="12" font-weight="bold" font-style="normal" fill="#FFFFFF" text-anchor="start" letter-spacing="0.8">кг/ч.</text>
<rect x="160" y="194" width="65" height="18" fill="#FFFFFF"/>
<rect x="160" y="194" width="64" height="17" fill="#000"/>
<rect x="162" y="196" width="62" height="15" fill="#C0C0C0"/>
<rect x="68" y="218" width="62" height="18" fill="#FFFFFF"/>
<rect x="68" y="218" width="61" height="17" fill="#8C7C6C"/>
<rect x="69" y="219" width="60" height="16" fill="#ECE9D8"/>
<text x="127" y="231.5" font-family="Liberation Sans" font-size="13" font-weight="bold" font-style="normal" fill="#000" text-anchor="end">0</text>
<text x="131" y="230" font-family="Liberation Sans" font-size="12" font-weight="bold" font-style="normal" fill="#FFFFFF" text-anchor="start">кг</text>
<rect x="160" y="217" width="63" height="19" fill="#8C7C6C"/>
<rect x="160" y="217" width="62" height="18" fill="#FFFFFF"/>
<rect x="161" y="218" width="61" height="17" fill="#ECE9D8"/>
<text x="191.5" y="230.5" font-family="Liberation Sans" font-size="12" font-weight="normal" font-style="normal" fill="#000" text-anchor="middle">Отложить</text>
<rect x="10" y="308" width="52" height="15" fill="#000"/>
<rect x="11" y="309" width="50" height="13" fill="#C0C0C0"/>
<rect x="11" y="309" width="50" height="1" fill="#E8E8E8"/>
<rect x="11" y="309" width="1" height="13" fill="#E8E8E8"/>
<text x="36" y="320" font-family="Liberation Sans" font-size="12" font-weight="normal" font-style="normal" fill="#000" text-anchor="middle">F</text>
<rect x="70" y="309" width="15" height="14" fill="#FFFFFF"/>
<rect x="71" y="310" width="13" height="12" fill="#A0A0A0"/>
<rect x="72" y="311" width="11" height="11" fill="#C0C0C0"/>
<rect x="149" y="520" width="52" height="18" fill="#8C7C6C"/>
<rect x="149" y="520" width="51" height="17" fill="#FFFFFF"/>
<rect x="150" y="521" width="50" height="16" fill="#ECE9D8"/>
<text x="175.0" y="533.0" font-family="Liberation Sans" font-size="12" font-weight="bold" font-style="normal" fill="#000" text-anchor="middle">Подр-а</text>
<rect x="149" y="542" width="52" height="19" fill="#8C7C6C"/>
<rect x="149" y="542" width="51" height="18" fill="#FFFFFF"/>
<rect x="150" y="543" width="50" height="17" fill="#ECE9D8"/>
<text x="175.0" y="555.5" font-family="Liberation Sans" font-size="12" font-weight="bold" font-style="normal" fill="#000" text-anchor="middle">Подача</text>
<rect x="292" y="520" width="52" height="18" fill="#8C7C6C"/>
<rect x="292" y="520" width="51" height="17" fill="#FFFFFF"/>
<rect x="293" y="521" width="50" height="16" fill="#ECE9D8"/>
<text x="318.0" y="533.0" font-family="Liberation Sans" font-size="12" font-weight="bold" font-style="normal" fill="#000" text-anchor="middle">Подр-а</text>
<rect x="292" y="542" width="52" height="19" fill="#8C7C6C"/>
<rect x="292" y="542" width="51" height="18" fill="#FFFFFF"/>
<rect x="293" y="543" width="50" height="17" fill="#ECE9D8"/>
<text x="318.0" y="555.5" font-family="Liberation Sans" font-size="12" font-weight="bold" font-style="normal" fill="#000" text-anchor="middle">Подача</text>
<rect x="62" y="640" width="59" height="20" fill="#8C7C6C"/>
<rect x="62" y="640" width="58" height="19" fill="#FFFFFF"/>
<rect x="63" y="641" width="57" height="18" fill="#ECE9D8"/>
<text x="91.5" y="654.0" font-family="Liberation Sans" font-size="12" font-weight="bold" font-style="normal" fill="#000" text-anchor="middle">Пуск</text>
<rect x="8" y="666" width="116" height="27" fill="#B0A8A0"/>
<rect x="8" y="666" width="115" height="26" fill="#FFFFFF"/>
<rect x="9" y="667" width="114" height="25" fill="#009999"/>
<rect x="12" y="673" width="27" height="17" fill="#8C7C6C"/>
<rect x="12" y="673" width="26" height="16" fill="#FFFFFF"/>
<rect x="13" y="674" width="25" height="15" fill="#ECE9D8"/>
<text x="25.5" y="685.5" font-family="Liberation Sans" font-size="12" font-weight="bold" font-style="normal" fill="#000" text-anchor="middle">авт</text>
<rect x="42" y="674" width="56" height="15" fill="#000"/>
<rect x="43" y="675" width="54" height="13" fill="#C0C0C0"/>
<text x="70" y="686" font-family="Liberation Sans" font-size="12" font-weight="normal" font-style="normal" fill="#000" text-anchor="middle">F</text>
<rect x="102" y="674" width="16" height="16" fill="#FFFFFF"/>
<rect x="103" y="675" width="14" height="14" fill="#A0A0A0"/>
<rect x="104" y="676" width="13" height="13" fill="#C0C0C0"/>
<text x="26" y="246" font-family="Liberation Sans" font-size="13" font-weight="bold" font-style="normal" fill="#FFFFFF" text-anchor="start" letter-spacing="0.6">D03</text>
<rect x="65" y="238" width="1" height="19" fill="#FFFFFF"/>
<rect x="63" y="238" width="5" height="1" fill="#000"/><rect x="61" y="239" width="9" height="1" fill="#000"/><rect x="63" y="239" width="5" height="1" fill="#00FFFF"/><rect x="61" y="240" width="9" height="1" fill="#000"/><rect x="62" y="240" width="7" height="1" fill="#00FFFF"/><rect x="60" y="241" width="11" height="1" fill="#000"/><rect x="61" y="241" width="9" height="1" fill="#00FFFF"/><rect x="61" y="242" width="9" height="1" fill="#000"/><rect x="62" y="242" width="7" height="1" fill="#00FFFF"/><rect x="61" y="243" width="9" height="1" fill="#000"/><rect x="63" y="243" width="5" height="1" fill="#00FFFF"/><rect x="63" y="244" width="5" height="1" fill="#000"/>
<text x="81" y="271" font-family="Liberation Sans" font-size="13" font-weight="bold" font-style="normal" fill="#FFFFFF" text-anchor="start" letter-spacing="1.5">582</text>
<path d="M53.5,256.5 H74.5 V303.5 H72.5 V283.5 H55.5 V303.5 H53.5 Z" fill="#00FFFF" stroke="#000" stroke-width="1"/>
<rect x="55.5" y="258.5" width="17" height="24" fill="none" stroke="#000"/>
<rect x="57.5" y="268.5" width="13" height="10" fill="#00FFFF" stroke="#000"/>
<path d="M55.5,284 H72.5 L65,292.5 H63 Z" fill="#00FFFF"/><path d="M55.5,284 L63,292.5 H65 L72.5,284" fill="none" stroke="#000"/>
<rect x="61.5" y="292.5" width="6" height="3" fill="#00FFFF" stroke="#000"/>
<rect x="65" y="307" width="1" height="35" fill="#FFFFFF"/>
<text x="26" y="357" font-family="Liberation Sans" font-size="13" font-weight="bold" font-style="normal" fill="#FFFFFF" text-anchor="start" letter-spacing="1.5">402</text>
<path d="M62.5,341.5 H67.5 V345.5 H62.5 Z" fill="#00FFFF" stroke="#000" stroke-width="1"/>
<path d="M59.5,345.5 H72.5 L69.5,351 V397.5 H59.5 Z" fill="#00FFFF" stroke="#000" stroke-width="1"/>
<path d="M70,353.5 L100,358.5 V377.5 H70 Z" fill="#00FFFF" stroke="#000" stroke-width="1"/>
<rect x="73" y="352" width="5" height="3" fill="#000"/><rect x="91" y="355" width="5" height="3" fill="#000"/>
<path d="M71.5,377.5 H92.5 V380.5 H71.5 Z" fill="#00FFFF" stroke="#000" stroke-width="1"/>
<path d="M95.5,377.5 H98.5 V380.5 H95.5 Z" fill="#00FFFF" stroke="#000" stroke-width="1"/>
<path d="M51.5,368.5 H59 V378.5 H51.5 Z" fill="#00FFFF" stroke="#000" stroke-width="1"/>
<rect x="51" y="368" width="8" height="3" fill="#000"/>
<path d="M54.5,379.5 H59 V382.5 H54.5 Z" fill="#00FFFF" stroke="#000" stroke-width="1"/>
<path d="M97.5,364.5 H103.5 V373.5 H97.5 Z" fill="#00FFFF" stroke="#000" stroke-width="1"/>
<path d="M97.5,385.5 H100.5 V394.5 H97.5 Z" fill="#00FFFF" stroke="#000" stroke-width="1"/>
<path d="M100.5,341.5 H109.5 V397.5 H100.5 Z" fill="#00FFFF" stroke="#000" stroke-width="1"/>
<path d="M101,344.5 H109 M101,391.5 H109" stroke="#000" fill="none"/>
<path d="M111.5,341.5 H122.5 V397.5 H111.5 Z" fill="#00FFFF" stroke="#000" stroke-width="1"/>
<rect x="112" y="342" width="3" height="7" fill="#00FFFF" stroke="#000"/>
<path d="M115.5,348 V368 M119.5,348 V396 M112,369.5 H120 M112,394.5 H122" stroke="#000" fill="none"/>
<path d="M113,372 L117,374 L113,376 L117,378 L113,380 L117,382 L113,384 L117,386 L113,388" stroke="#000" fill="none"/>
<rect x="122" y="348" width="3" height="4" fill="#000"/><rect x="122" y="384" width="3" height="4" fill="#000"/>
<text x="28" y="420" font-family="Liberation Sans" font-size="11" font-weight="normal" font-style="normal" fill="#FFFFFF" text-anchor="start">отходы</text>
<rect x="65" y="402" width="1" height="9" fill="#FFFFFF"/>
<text x="79" y="421" font-family="Liberation Sans" font-size="13" font-weight="bold" font-style="normal" fill="#FFFFFF" text-anchor="start" letter-spacing="1.5">782</text>
<rect x="112" y="402" width="1" height="9" fill="#FFFFFF"/>
<g fill="#FFFF00"><rect x="111" y="409" width="3" height="1"/><rect x="111" y="410" width="3" height="1"/><rect x="111" y="411" width="3" height="1"/><rect x="111" y="412" width="3" height="1"/><rect x="111" y="413" width="3" height="1"/><rect x="111" y="414" width="4" height="1"/><rect x="112" y="415" width="4" height="1"/><rect x="113" y="416" width="4" height="1"/><rect x="114" y="417" width="5" height="1"/><rect x="115" y="418" width="4" height="1"/><rect x="116" y="419" width="3" height="1"/></g>
<rect x="118" y="414" width="24" height="1" fill="#FFFFFF"/>
<rect x="141" y="414" width="1" height="169" fill="#FFFFFF"/>
<text x="59" y="446" font-family="Liberation Sans" font-size="13" font-weight="bold" font-style="normal" fill="#FFFFFF" text-anchor="start" letter-spacing="1.5">303</text>
<rect x="112" y="402" width="1" height="29" fill="#FFFFFF"/>
<path d="M91.5,479 V442 L106.5,436.5 H118.5 L133.5,442 V479" fill="#008080" stroke="#000" stroke-width="1"/>
<path d="M92.5,479 V442.7 L106.7,437.5 H118.3 L132.5,442.7 V479" fill="none" stroke="#00FFFF" stroke-width="1"/>
<path d="M93.5,479 V443.4 L107,438.5 H118 L131.5,443.4 V479" fill="#22C8C8" stroke="#000" stroke-width="1"/>
<rect x="94" y="473" width="37" height="6" fill="#008080"/>
<rect x="106.5" y="430.5" width="12" height="6" fill="#000"/>
<rect x="108" y="432" width="2" height="3" fill="#00FFFF"/><rect x="115" y="432" width="2" height="3" fill="#00FFFF"/>
<rect x="110.5" y="430.5" width="4" height="10" fill="#00FFFF" stroke="#000"/>
<rect x="109.5" y="440.5" width="6" height="7" fill="#00FFFF" stroke="#000"/>
<rect x="112" y="443" width="1" height="1" fill="#000"/>
<rect x="109" y="448" width="3" height="4" fill="#00FFFF"/><rect x="113" y="448" width="3" height="4" fill="#00FFFF"/>
<path d="M94,451.5 L108,444.5 M131,451.5 L117,444.5" stroke="#000" fill="none"/>
<path d="M101,450 L103,447.5 L105,450 Z M120,450 L122,447.5 L124,450 Z" fill="#000"/>
<path d="M94,445 L106,440 M131,445 L119,440" stroke="#00FFFF" fill="none"/>
<rect x="94" y="452" width="37" height="1" fill="#000"/><rect x="94" y="453" width="37" height="2" fill="#00FFFF"/><rect x="94" y="455" width="37" height="1" fill="#000"/><rect x="94" y="456" width="37" height="1.5" fill="#00FFFF"/><rect x="94" y="457.5" width="37" height="1" fill="#000"/>
<path d="M100,453 V455 M112,453 V455 M125,453 V455" stroke="#000" fill="none"/>
<path d="M98.5,459.5 H104.5 L103,463 V466.5 H104.5 V470.5 H98.5 V466.5 H100 V463 Z" fill="#00FFFF" stroke="#000"/>
<rect x="99.5" y="472.5" width="4" height="4" fill="#00FFFF" stroke="#000"/>
<path d="M121.5,459.5 H127.5 L126,463 V466.5 H127.5 V470.5 H121.5 V466.5 H123 V463 Z" fill="#00FFFF" stroke="#000"/>
<rect x="122.5" y="472.5" width="4" height="4" fill="#00FFFF" stroke="#000"/>
<rect x="105" y="459.5" width="6" height="9" rx="1.5" fill="#00FFFF" stroke="#000"/><rect x="114" y="459.5" width="6" height="9" rx="1.5" fill="#00FFFF" stroke="#000"/>
<path d="M111,462.5 H114 M111,465.5 H114" stroke="#00FFFF" fill="none"/>
<rect x="94" y="471" width="37" height="2" fill="#00FFFF"/><path d="M94,470.5 H131 M94,473.5 H131" stroke="#000" fill="none"/>
<rect x="112" y="469" width="1" height="10" fill="#00FFFF"/>
<rect x="101" y="482" width="1" height="12" fill="#FFFFFF"/>
<rect x="124" y="482" width="1" height="12" fill="#FFFFFF"/>
<rect x="101" y="493" width="41" height="1" fill="#FFFFFF"/>
<circle cx="124.5" cy="493.5" r="1.5" fill="#fff"/><circle cx="141.5" cy="493.5" r="1.5" fill="#fff"/>
<text x="75" y="573" font-family="Liberation Sans" font-size="13" font-weight="bold" font-style="normal" fill="#FFFFFF" text-anchor="start" letter-spacing="1.5">513</text>
<path d="M113.5,579.5 H121.5 V586.5 H126.5 V579.5 H134.5 V586.5 H139.5 L134.5,594 V599 L128.5,605.5 H119 L113.5,600 Z" fill="#00FFFF" stroke="#000" stroke-width="1"/>
<rect x="121.5" y="589.5" width="6" height="4" fill="#00FFFF" stroke="#000"/>
<circle cx="124.5" cy="599.5" r="3" fill="#00FFFF" stroke="#000"/>
<rect x="109.5" y="601.5" width="4" height="4" fill="#00FFFF" stroke="#000"/>
<rect x="114" y="581" width="8" height="1" fill="#000"/>
<rect x="127" y="581" width="8" height="1" fill="#000"/>
<rect x="119" y="556" width="1" height="23" fill="#00FFFF"/>
<rect x="128" y="556" width="1" height="23" fill="#00FFFF"/>
<path d="M117.5,556.5 H119.5 M119.5,560.5 L114.5,566 L119.5,567.5 M119.5,572 L114.5,576.5 L119.5,578 M128.5,556.5 H130.5 M128.5,560.5 L133.5,563 L130.5,567.5 H128.5 M128.5,572 L133.5,574.5 L130.5,578 H128.5" stroke="#00FFFF" stroke-width="1" fill="none"/>
<path d="M228,228 L235,221 L265,221 L258,228 Z" fill="#429C9C"/>
<rect x="228" y="228" width="30" height="50" fill="#52C4C4"/>
<path d="M258,228 L265,221 L265,272 L258,278 Z" fill="#5EDEDE"/>
<path d="M228,278 L258,278 L248,283 L238,283 Z" fill="#429C9C"/>
<rect x="240" y="235" width="8" height="6" fill="#000"/><rect x="241" y="236" width="6" height="4" fill="#00FFFF"/>
<rect x="240" y="270" width="8" height="6" fill="#000"/><rect x="241" y="271" width="6" height="4" fill="#00FFFF"/>
<rect x="230" y="248" width="23" height="11" fill="#ECE6D8"/>
<rect x="230" y="248" width="23" height="1" fill="#A89C90"/>
<rect x="230" y="248" width="1" height="11" fill="#A89C90"/>
<text x="241.5" y="257" font-family="Liberation Sans" font-size="10" font-weight="normal" font-style="normal" fill="#000" text-anchor="middle">Б40</text>
<rect x="239" y="284" width="9" height="2" fill="#00FFFF"/>
<rect x="235" y="288" width="19" height="2" fill="#FFFF00"/>
<rect x="252" y="288" width="2" height="6" fill="#FFFF00"/>
<rect x="239" y="290" width="9" height="2" fill="#00FFFF"/>
<text x="260" y="297" font-family="Liberation Sans" font-size="13" font-weight="bold" font-style="normal" fill="#FFFFFF" text-anchor="start" letter-spacing="1.5">926</text>
<rect x="242" y="293" width="1" height="22" fill="#FFFFFF"/>
<text x="209" y="325" font-family="Liberation Sans" font-size="13" font-weight="bold" font-style="normal" fill="#FFFFFF" text-anchor="start" letter-spacing="1.5">825</text>
<rect x="242" y="318" width="1" height="8" fill="#1A9A9A"/>
<g fill="#FFFF00"><rect x="241" y="314" width="3" height="1"/><rect x="241" y="315" width="3" height="1"/><rect x="241" y="316" width="3" height="1"/><rect x="241" y="317" width="3" height="1"/><rect x="241" y="318" width="3" height="1"/><rect x="241" y="319" width="4" height="1"/><rect x="242" y="320" width="4" height="1"/><rect x="243" y="321" width="4" height="1"/><rect x="244" y="322" width="5" height="1"/><rect x="245" y="323" width="4" height="1"/><rect x="246" y="324" width="3" height="1"/></g>
<rect x="249" y="319" width="73" height="1" fill="#FFFFFF"/>
<rect x="321" y="319" width="1" height="106" fill="#FFFFFF"/>
<rect x="242" y="325" width="1" height="25" fill="#FFFFFF"/>
<rect x="238" y="349" width="8" height="6" fill="#000"/><rect x="239" y="350" width="6" height="4" fill="#00FFFF"/>
<rect x="242" y="356" width="1" height="9" fill="#FFFFFF"/>
<text x="201" y="357" font-family="Liberation Sans" font-size="13" font-weight="bold" font-style="normal" fill="#FFFFFF" text-anchor="start" letter-spacing="1.5">406</text>
<path d="M240.5,364.5 H243.5 V368.5 H240.5 Z" fill="#00FFFF" stroke="#000" stroke-width="1"/>
<path d="M209,382 H272 V393 H209 Z" fill="#000"/>
<path d="M210,383 H262 V385 L254,388 L240,391 L226,389 L222,387 L217,385 H210 Z" fill="#00FFFF"/>
<path d="M210,392 L212,386 L214,392 Z M216,386 H219 V392 H216 Z M220,387 H224 V390 H220 Z M225,389 H229 V392 H225 Z M232,391 H237 V392 H232 Z M240,390 H246 V392 H240 Z M249,389 H253 V392 H249 Z M256,386 H261 V392 H256 Z M263,384 H265 V392 H263 Z M267,385 H269 V391 H267 Z" fill="#00FFFF"/>
<path d="M206.5,368.5 H277.5 V381.5 H206.5 Z" fill="#00FFFF" stroke="#000" stroke-width="1"/>
<path d="M206,378 H203.5 Q202,379 202.5,382.5 L204,384 H206 Z" fill="#00FFFF" stroke="#000"/>
<rect x="278" y="377.5" width="2.5" height="4" fill="#00FFFF" stroke="#000"/>
<rect x="206.5" y="393.5" width="71" height="3" rx="1.5" fill="#00FFFF" stroke="#000"/>
<text x="291" y="384" font-family="Liberation Sans" font-size="13" font-weight="bold" font-style="normal" fill="#FFFFFF" text-anchor="start" letter-spacing="1.5">927</text>
<path d="M286,391 V400 H284 L288,404 L292,400 H290 V391 Z" fill="#FFFF00"/>
<rect x="284" y="387" width="1" height="4" fill="#FFFFFF"/>
<rect x="284" y="405" width="1" height="20" fill="#FFFFFF"/>
<rect x="292" y="405" width="1" height="6" fill="#FFFFFF"/>
<text x="292" y="420" font-family="Liberation Sans" font-size="11" font-weight="normal" font-style="normal" fill="#FFFFFF" text-anchor="start">отх.</text>
<rect x="223" y="424" width="99" height="1" fill="#FFFFFF"/>
<circle cx="285.5" cy="424.5" r="1.5" fill="#fff"/>
<text x="189" y="444" font-family="Liberation Sans" font-size="13" font-weight="bold" font-style="normal" fill="#FFFFFF" text-anchor="start" letter-spacing="1.5">810</text>
<rect x="223" y="424" width="1" height="10" fill="#FFFFFF"/>
<rect x="223" y="438" width="1" height="8" fill="#1A9A9A"/>
<g fill="#FFFF00"><rect x="222" y="433" width="3" height="1"/><rect x="222" y="434" width="3" height="1"/><rect x="222" y="435" width="3" height="1"/><rect x="222" y="436" width="3" height="1"/><rect x="222" y="437" width="3" height="1"/><rect x="222" y="438" width="4" height="1"/><rect x="223" y="439" width="4" height="1"/><rect x="224" y="440" width="4" height="1"/><rect x="225" y="441" width="5" height="1"/><rect x="226" y="442" width="4" height="1"/><rect x="227" y="443" width="3" height="1"/></g>
<rect x="230" y="438" width="41" height="1" fill="#FFFFFF"/>
<rect x="270" y="438" width="1" height="85" fill="#FFFFFF"/>
<rect x="223" y="445" width="1" height="78" fill="#FFFFFF"/>
<path d="M208,529 L215,522 L245,522 L238,529 Z" fill="#429C9C"/>
<rect x="208" y="529" width="30" height="50" fill="#52C4C4"/>
<path d="M238,529 L245,522 L245,573 L238,579 Z" fill="#5EDEDE"/>
<path d="M208,579 L238,579 L228,584 L218,584 Z" fill="#429C9C"/>
<rect x="220" y="536" width="8" height="6" fill="#000"/><rect x="221" y="537" width="6" height="4" fill="#00FFFF"/>
<rect x="220" y="571" width="8" height="6" fill="#000"/><rect x="221" y="572" width="6" height="4" fill="#00FFFF"/>
<rect x="212" y="549" width="23" height="11" fill="#ECE6D8"/>
<rect x="212" y="549" width="23" height="1" fill="#A89C90"/>
<rect x="212" y="549" width="1" height="11" fill="#A89C90"/>
<text x="223.5" y="558" font-family="Liberation Sans" font-size="10" font-weight="normal" font-style="normal" fill="#000" text-anchor="middle">Б3а</text>
<path d="M250,529 L257,522 L287,522 L280,529 Z" fill="#429C9C"/>
<rect x="250" y="529" width="30" height="50" fill="#52C4C4"/>
<path d="M280,529 L287,522 L287,573 L280,579 Z" fill="#5EDEDE"/>
<path d="M250,579 L280,579 L270,584 L260,584 Z" fill="#429C9C"/>
<rect x="262" y="536" width="8" height="6" fill="#000"/><rect x="263" y="537" width="6" height="4" fill="#00FFFF"/>
<rect x="262" y="571" width="8" height="6" fill="#000"/><rect x="263" y="572" width="6" height="4" fill="#00FFFF"/>
<rect x="254" y="549" width="23" height="11" fill="#ECE6D8"/>
<rect x="254" y="549" width="23" height="1" fill="#A89C90"/>
<rect x="254" y="549" width="1" height="11" fill="#A89C90"/>
<text x="265.5" y="558" font-family="Liberation Sans" font-size="10" font-weight="normal" font-style="normal" fill="#000" text-anchor="middle">Б3б</text>
<rect x="219" y="585" width="9" height="2" fill="#00FFFF"/>
<rect x="215" y="589" width="19" height="2" fill="#FFFF00"/>
<rect x="232" y="589" width="2" height="6" fill="#FFFF00"/>
<rect x="219" y="591" width="9" height="2" fill="#00FFFF"/>
<rect x="261" y="585" width="9" height="2" fill="#00FFFF"/>
<rect x="257" y="589" width="19" height="2" fill="#FFFF00"/>
<rect x="274" y="589" width="2" height="6" fill="#FFFF00"/>
<rect x="261" y="591" width="9" height="2" fill="#00FFFF"/>
<text x="187" y="598" font-family="Liberation Sans" font-size="13" font-weight="bold" font-style="normal" fill="#FFFFFF" text-anchor="start" letter-spacing="1.5">905</text>
<text x="282" y="598" font-family="Liberation Sans" font-size="13" font-weight="bold" font-style="normal" fill="#FFFFFF" text-anchor="start" letter-spacing="1.5">906</text>
<rect x="224" y="594" width="1" height="8" fill="#FFFFFF"/>
<rect x="265" y="594" width="1" height="8" fill="#FFFFFF"/>
<rect x="224" y="601" width="42" height="1" fill="#FFFFFF"/>
<circle cx="230.5" cy="601.5" r="1.5" fill="#fff"/>
<rect x="230" y="601" width="1" height="16" fill="#FFFFFF"/>
<text x="159" y="623" font-family="Liberation Sans" font-size="11" font-weight="normal" font-style="normal" fill="#FFFFFF" text-anchor="start" letter-spacing="0.4">выбой</text>
<rect x="196" y="619" width="29" height="1" fill="#FFFFFF"/>
<rect x="230" y="618" width="1" height="8" fill="#1A9A9A"/>
<g fill="#FFFF00"><rect x="229" y="615" width="3" height="1"/><rect x="229" y="616" width="3" height="1"/><rect x="229" y="617" width="3" height="1"/><rect x="229" y="618" width="3" height="1"/><rect x="229" y="619" width="3" height="1"/><rect x="228" y="620" width="4" height="1"/><rect x="227" y="621" width="4" height="1"/><rect x="226" y="622" width="4" height="1"/><rect x="224" y="623" width="5" height="1"/><rect x="224" y="624" width="4" height="1"/><rect x="224" y="625" width="3" height="1"/></g>
<text x="239" y="625" font-family="Liberation Sans" font-size="13" font-weight="bold" font-style="normal" fill="#FFFFFF" text-anchor="start" letter-spacing="1.5">748</text>
<rect x="230" y="625" width="1" height="7" fill="#FFFFFF"/>
<rect x="230" y="634" width="1" height="8" fill="#1A9A9A"/>
<g fill="#FFFF00"><rect x="229" y="631" width="3" height="1"/><rect x="229" y="632" width="3" height="1"/><rect x="229" y="633" width="3" height="1"/><rect x="229" y="634" width="3" height="1"/><rect x="229" y="635" width="3" height="1"/><rect x="228" y="636" width="4" height="1"/><rect x="227" y="637" width="4" height="1"/><rect x="226" y="638" width="4" height="1"/><rect x="224" y="639" width="5" height="1"/><rect x="224" y="640" width="4" height="1"/><rect x="224" y="641" width="3" height="1"/></g>
<text x="239" y="642" font-family="Liberation Sans" font-size="13" font-weight="bold" font-style="normal" fill="#FFFFFF" text-anchor="start" letter-spacing="1.5">804</text>
<rect x="214" y="636" width="11" height="1" fill="#FFFFFF"/>
<rect x="214" y="636" width="1" height="12" fill="#FFFFFF"/>
<rect x="161" y="647" width="54" height="1" fill="#FFFFFF"/>
<rect x="230" y="641" width="1" height="7" fill="#FFFFFF"/>
<rect x="230" y="647" width="70" height="1" fill="#FFFFFF"/>
<rect x="299" y="647" width="1" height="10" fill="#FFFFFF"/>
<rect x="195" y="645" width="5" height="1" fill="#000"/><rect x="193" y="646" width="9" height="1" fill="#000"/><rect x="195" y="646" width="5" height="1" fill="#00FFFF"/><rect x="193" y="647" width="9" height="1" fill="#000"/><rect x="194" y="647" width="7" height="1" fill="#00FFFF"/><rect x="192" y="648" width="11" height="1" fill="#000"/><rect x="193" y="648" width="9" height="1" fill="#00FFFF"/><rect x="193" y="649" width="9" height="1" fill="#000"/><rect x="194" y="649" width="7" height="1" fill="#00FFFF"/><rect x="193" y="650" width="9" height="1" fill="#000"/><rect x="195" y="650" width="5" height="1" fill="#00FFFF"/><rect x="195" y="651" width="5" height="1" fill="#000"/>
<rect x="275" y="645" width="5" height="1" fill="#000"/><rect x="273" y="646" width="9" height="1" fill="#000"/><rect x="275" y="646" width="5" height="1" fill="#00FFFF"/><rect x="273" y="647" width="9" height="1" fill="#000"/><rect x="274" y="647" width="7" height="1" fill="#00FFFF"/><rect x="272" y="648" width="11" height="1" fill="#000"/><rect x="273" y="648" width="9" height="1" fill="#00FFFF"/><rect x="273" y="649" width="9" height="1" fill="#000"/><rect x="274" y="649" width="7" height="1" fill="#00FFFF"/><rect x="273" y="650" width="9" height="1" fill="#000"/><rect x="275" y="650" width="5" height="1" fill="#00FFFF"/><rect x="275" y="651" width="5" height="1" fill="#000"/>
<text x="187" y="672" font-family="Liberation Sans" font-size="13" font-weight="bold" font-style="normal" fill="#FFFFFF" text-anchor="start" letter-spacing="0.6">D08</text>
<text x="253" y="672" font-family="Liberation Sans" font-size="13" font-weight="bold" font-style="normal" fill="#FFFFFF" text-anchor="start" letter-spacing="0.6">D09</text>
<text x="127" y="656" font-family="Liberation Sans" font-size="13" font-weight="bold" font-style="normal" fill="#FFFFFF" text-anchor="start" letter-spacing="1.5">103</text>
<rect x="161" y="647" width="1" height="19" fill="#FFFFFF"/>
<path d="M152.5,665.5 H170.5 V698 H152.5 Z" fill="#00FFFF" stroke="#000" stroke-width="1"/>
<rect x="157.5" y="668.5" width="6" height="4" fill="#00FFFF" stroke="#000"/>
<path d="M156.5,692 V686 M156.5,692 H170" stroke="#000" fill="none"/>
<path d="M153.5,698.5 H170.5 V701.5 H153.5 Z" fill="#00FFFF" stroke="#000" stroke-width="1"/>
<path d="M150.5,701.5 H173.5 V727.5 H150.5 Z" fill="#00FFFF" stroke="#000" stroke-width="1"/>
<path d="M150,714.5 H174" stroke="#000" fill="none"/>
<path d="M124.5,727.5 H173.5 V730.5 H124.5 Z" fill="#00FFFF" stroke="#000" stroke-width="1"/>
<path d="M129.5,706.5 H141.5 V721.5 H129.5 Z" fill="#00FFFF" stroke="#000" stroke-width="1"/>
<circle cx="134.5" cy="714.5" r="3" fill="#00FFFF" stroke="#000"/>
<path d="M124,714.5 H150 M127.5,707 V721" stroke="#000" fill="none"/>
<path d="M141.5,712.5 H150.5 V716.5 H141.5 Z" fill="#00FFFF" stroke="#000" stroke-width="1"/>
<rect x="173" y="708" width="9" height="1" fill="#FFFFFF"/>
<text x="220" y="697" font-family="Liberation Sans" font-size="13" font-weight="bold" font-style="normal" fill="#FFFFFF" text-anchor="start" letter-spacing="1.5">504</text>
<path d="M207.5,703.5 H199.5 V710.5 H194.5 V703.5 H186.5 V710.5 H181.5 L186.5,717.5 V723.5 L192,729.5 H202 L207.5,724 Z" fill="#00FFFF" stroke="#000" stroke-width="1"/>
<rect x="194.5" y="713.5" width="6" height="4" fill="#00FFFF" stroke="#000"/>
<circle cx="197.5" cy="723.5" r="3" fill="#00FFFF" stroke="#000"/>
<rect x="182.5" y="725.5" width="4" height="4" fill="#00FFFF" stroke="#000"/>
<rect x="187" y="705" width="8" height="1" fill="#000"/>
<rect x="200" y="705" width="8" height="1" fill="#000"/>
<rect x="192" y="680" width="1" height="23" fill="#00FFFF"/>
<rect x="201" y="680" width="1" height="23" fill="#00FFFF"/>
<path d="M190.5,680.5 H192.5 M192.5,684.5 L187.5,690 L192.5,691.5 M192.5,696 L187.5,700.5 L192.5,702 M201.5,680.5 H203.5 M201.5,684.5 L206.5,687 L203.5,691.5 H201.5 M201.5,696 L206.5,698.5 L203.5,702 H201.5" stroke="#00FFFF" stroke-width="1" fill="none"/>
<path d="M293.5,656.5 H303.5 V659.5 H293.5 Z" fill="#00FFFF" stroke="#000" stroke-width="1"/>
<path d="M293.5,659.5 H303.5 L307.5,663.5 V689.5 L303.5,694.5 H293.5 L289.5,689.5 V663.5 Z" fill="#00FFFF" stroke="#000" stroke-width="1"/>
<path d="M290,663.5 H307 M290,688.5 H307 M290,690.5 H307" stroke="#000" fill="none"/>
<path d="M293.5,694.5 H303.5 V698.5 H293.5 Z" fill="#00FFFF" stroke="#000" stroke-width="1"/>
<rect x="298" y="699" width="1" height="12" fill="#FFFFFF"/>
<rect x="298" y="710" width="14" height="1" fill="#FFFFFF"/>
<path d="M337.5,703.5 H329.5 V710.5 H324.5 V703.5 H316.5 V710.5 H311.5 L316.5,717.5 V723.5 L322,729.5 H332 L337.5,724 Z" fill="#00FFFF" stroke="#000" stroke-width="1"/>
<rect x="324.5" y="713.5" width="6" height="4" fill="#00FFFF" stroke="#000"/>
<circle cx="327.5" cy="723.5" r="3" fill="#00FFFF" stroke="#000"/>
<rect x="312.5" y="725.5" width="4" height="4" fill="#00FFFF" stroke="#000"/>
<rect x="317" y="705" width="8" height="1" fill="#000"/>
<rect x="330" y="705" width="8" height="1" fill="#000"/>
<rect x="322" y="680" width="1" height="23" fill="#00FFFF"/>
<rect x="331" y="680" width="1" height="23" fill="#00FFFF"/>
<path d="M320.5,680.5 H322.5 M322.5,684.5 L317.5,690 L322.5,691.5 M322.5,696 L317.5,700.5 L322.5,702 M331.5,680.5 H333.5 M331.5,684.5 L336.5,687 L333.5,691.5 H331.5 M331.5,696 L336.5,698.5 L333.5,702 H331.5" stroke="#00FFFF" stroke-width="1" fill="none"/>
<path d="M731.5,703.5 H723.5 V710.5 H718.5 V703.5 H710.5 V710.5 H705.5 L710.5,717.5 V723.5 L716,729.5 H726 L731.5,724 Z" fill="#00FFFF" stroke="#000" stroke-width="1"/>
<rect x="718.5" y="713.5" width="6" height="4" fill="#00FFFF" stroke="#000"/>
<circle cx="721.5" cy="723.5" r="3" fill="#00FFFF" stroke="#000"/>
<rect x="706.5" y="725.5" width="4" height="4" fill="#00FFFF" stroke="#000"/>
<rect x="711" y="705" width="8" height="1" fill="#000"/>
<rect x="724" y="705" width="8" height="1" fill="#000"/>
<rect x="716" y="680" width="1" height="23" fill="#00FFFF"/>
<rect x="725" y="680" width="1" height="23" fill="#00FFFF"/>
<path d="M714.5,680.5 H716.5 M716.5,684.5 L711.5,690 L716.5,691.5 M716.5,696 L711.5,700.5 L716.5,702 M725.5,680.5 H727.5 M725.5,684.5 L730.5,687 L727.5,691.5 H725.5 M725.5,696 L730.5,698.5 L727.5,702 H725.5" stroke="#00FFFF" stroke-width="1" fill="none"/>
<text x="379" y="283" font-family="Liberation Sans" font-size="13" font-weight="bold" font-style="normal" fill="#FFFFFF" text-anchor="start" letter-spacing="1.5">567</text>
<rect x="347.5" y="278.5" width="13" height="11" fill="#00FFFF" stroke="#000"/>
<path d="M350.5,278.5 V289.5 M350.5,278.5 L360,289 M360,278.5 L350.5,289" stroke="#000" stroke-width="1" fill="none"/>
<rect x="360.5" y="270.5" width="6" height="26" fill="#00FFFF" stroke="#000"/>
<rect x="366.5" y="278.5" width="2" height="11" fill="#00FFFF" stroke="#000"/>
<rect x="349.5" y="291.5" width="10" height="10" fill="#00FFFF" stroke="#000"/>
<path d="M346,284.5 H340.5 V411.5 H360" stroke="#D0D0D0" stroke-dasharray="5,3" fill="none"/>
<text x="329" y="435" font-family="Liberation Sans" font-size="13" font-weight="bold" font-style="normal" fill="#FFFFFF" text-anchor="start" letter-spacing="1.5">204</text>
<path d="M370.5,404.5 H379.5 V406.5 H370.5 Z" fill="#00FFFF" stroke="#000" stroke-width="1"/>
<path d="M363.5,405.5 H386.5 V443.5 H363.5 Z" fill="#00FFFF" stroke="#000" stroke-width="1"/>
<path d="M360.5,407.5 H363.5 V416.5 H360.5 Z" fill="#00FFFF" stroke="#000" stroke-width="1"/>
<rect x="363.5" y="418.5" width="16" height="11" fill="none" stroke="#000"/>
<path d="M363,414.5 H386" stroke="#000" fill="none"/>
<path d="M364,445.5 H385.5 L375,471 H374 Z" fill="#00FFFF" stroke="#000" stroke-width="1"/>
<path d="M364.5,444 V478 M384.5,444 V478" stroke="#000" stroke-width="3" fill="none"/>
<path d="M364.5,444 V478 M384.5,444 V478" stroke="#00FFFF" stroke-width="1" fill="none"/>
<circle cx="374.5" cy="475" r="3" fill="#00FFFF" stroke="#000"/>
<rect x="449.5" y="705.5" width="13" height="11" fill="#00FFFF" stroke="#000"/>
<path d="M452.5,705.5 V716.5 M452.5,705.5 L462,716 M462,705.5 L452.5,716" stroke="#000" stroke-width="1" fill="none"/>
<rect x="462.5" y="697.5" width="6" height="26" fill="#00FFFF" stroke="#000"/>
<rect x="468.5" y="705.5" width="2" height="11" fill="#00FFFF" stroke="#000"/>
<rect x="451.5" y="718.5" width="10" height="10" fill="#00FFFF" stroke="#000"/>
<text x="449" y="690" font-family="Liberation Sans" font-size="13" font-weight="bold" font-style="normal" fill="#FFFFFF" text-anchor="start" letter-spacing="1.5">113</text>
<rect x="495.5" y="705.5" width="13" height="11" fill="#00FFFF" stroke="#000"/>
<path d="M498.5,705.5 V716.5 M498.5,705.5 L508,716 M508,705.5 L498.5,716" stroke="#000" stroke-width="1" fill="none"/>
<rect x="508.5" y="697.5" width="6" height="26" fill="#00FFFF" stroke="#000"/>
<rect x="514.5" y="705.5" width="2" height="11" fill="#00FFFF" stroke="#000"/>
<rect x="497.5" y="718.5" width="10" height="10" fill="#00FFFF" stroke="#000"/>
<text x="495" y="690" font-family="Liberation Sans" font-size="13" font-weight="bold" font-style="normal" fill="#FFFFFF" text-anchor="start" letter-spacing="1.5">114</text>
<rect x="542.5" y="705.5" width="13" height="11" fill="#00FFFF" stroke="#000"/>
<path d="M545.5,705.5 V716.5 M545.5,705.5 L555,716 M555,705.5 L545.5,716" stroke="#000" stroke-width="1" fill="none"/>
<rect x="555.5" y="697.5" width="6" height="26" fill="#00FFFF" stroke="#000"/>
<rect x="561.5" y="705.5" width="2" height="11" fill="#00FFFF" stroke="#000"/>
<rect x="544.5" y="718.5" width="10" height="10" fill="#00FFFF" stroke="#000"/>
<text x="542" y="690" font-family="Liberation Sans" font-size="13" font-weight="bold" font-style="normal" fill="#FFFFFF" text-anchor="start" letter-spacing="1.5">115</text>
<rect x="588.5" y="705.5" width="13" height="11" fill="#00FFFF" stroke="#000"/>
<path d="M591.5,705.5 V716.5 M591.5,705.5 L601,716 M601,705.5 L591.5,716" stroke="#000" stroke-width="1" fill="none"/>
<rect x="601.5" y="697.5" width="6" height="26" fill="#00FFFF" stroke="#000"/>
<rect x="607.5" y="705.5" width="2" height="11" fill="#00FFFF" stroke="#000"/>
<rect x="590.5" y="718.5" width="10" height="10" fill="#00FFFF" stroke="#000"/>
<text x="588" y="690" font-family="Liberation Sans" font-size="13" font-weight="bold" font-style="normal" fill="#FFFFFF" text-anchor="start" letter-spacing="1.5">116</text>
<text x="670" y="627" font-family="Liberation Sans" font-size="11" font-weight="normal" font-style="normal" fill="#FFFFFF" text-anchor="start">на ПС2</text>
<rect x="716" y="620" width="20" height="1" fill="#FFFFFF"/>
<text x="670" y="648" font-family="Liberation Sans" font-size="11" font-weight="normal" font-style="normal" fill="#FFFFFF" text-anchor="start">на ПС3</text>
<rect x="715" y="640" width="21" height="1" fill="#FFFFFF"/>
<text x="660" y="679" font-family="Liberation Sans" font-size="11" font-weight="normal" font-style="normal" fill="#FFFFFF" text-anchor="start">на ПС1</text>
<rect x="677" y="660" width="59" height="1" fill="#FFFFFF"/>
<rect x="677" y="660" width="1" height="8" fill="#FFFFFF"/>
<path d="M850,623.5 L855,618 H1002 L1005,621 V625 L1001,630 Z" fill="#123C3C"/>
<path d="M853,623 L857,618.5 M858,623 L862,618.5 M863,623 L867,618.5 M868,623 L872,618.5 M873,623 L877,618.5 M878,623 L882,618.5 M883,623 L887,618.5 M888,623 L892,618.5 M893,623 L897,618.5 M898,623 L902,618.5 M903,623 L907,618.5 M908,623 L912,618.5 M913,623 L917,618.5 M918,623 L922,618.5 M923,623 L927,618.5 M928,623 L932,618.5 M933,623 L937,618.5 M938,623 L942,618.5 M943,623 L947,618.5 M948,623 L952,618.5 M953,623 L957,618.5 M958,623 L962,618.5 M963,623 L967,618.5 M968,623 L972,618.5 M973,623 L977,618.5 M978,623 L982,618.5 M983,623 L987,618.5 M988,623 L992,618.5 M993,623 L997,618.5 M998,623 L1002,618.5 " stroke="#000" stroke-width="1.2" fill="none"/>
<rect x="847.5" y="623.5" width="155" height="10" rx="5" fill="#0E4848" stroke="#00FFFF" stroke-width="1"/>
<rect x="852" y="629" width="146" height="4" fill="#063030"/>
<path d="M854,625 L861,625 L856,630 Z" fill="#888"/>
<circle cx="852.5" cy="628.5" r="3.8" fill="#00FFFF" stroke="#000" stroke-width="1.6"/>
<circle cx="997.5" cy="628.5" r="3.8" fill="#00FFFF" stroke="#000" stroke-width="1.6"/>
<text x="814" y="632" font-family="Liberation Sans" font-size="13" font-weight="bold" font-style="normal" fill="#FFFFFF" text-anchor="start" letter-spacing="1.5">112</text>
<path d="M829,649.5 L834,644 H887 L890,647 V651 L886,656 Z" fill="#123C3C"/>
<path d="M832,649 L836,644.5 M837,649 L841,644.5 M842,649 L846,644.5 M847,649 L851,644.5 M852,649 L856,644.5 M857,649 L861,644.5 M862,649 L866,644.5 M867,649 L871,644.5 M872,649 L876,644.5 M877,649 L881,644.5 M882,649 L886,644.5 M887,649 L891,644.5 " stroke="#000" stroke-width="1.2" fill="none"/>
<rect x="826.5" y="649.5" width="61" height="10" rx="5" fill="#0E4848" stroke="#00FFFF" stroke-width="1"/>
<rect x="831" y="655" width="52" height="4" fill="#063030"/>
<path d="M833,651 L840,651 L835,656 Z" fill="#888"/>
<circle cx="831.5" cy="654.5" r="3.8" fill="#00FFFF" stroke="#000" stroke-width="1.6"/>
<circle cx="882.5" cy="654.5" r="3.8" fill="#00FFFF" stroke="#000" stroke-width="1.6"/>
<text x="894" y="658" font-family="Liberation Sans" font-size="13" font-weight="bold" font-style="normal" fill="#FFFFFF" text-anchor="start" letter-spacing="1.5">111</text>
<rect x="871" y="634" width="1" height="11" fill="#FFFFFF"/>
<rect x="830" y="659" width="1" height="14" fill="#FFFFFF"/>
<path d="M829,672 V680 H826 L830,685 L834,680 H831 V672 Z" fill="#FFFF00"/>
<text x="784" y="684" font-family="Liberation Sans" font-size="13" font-weight="bold" font-style="normal" fill="#FFFFFF" text-anchor="start" letter-spacing="1.5">805</text>
<text x="792" y="708" font-family="Liberation Sans" font-size="11" font-weight="normal" font-style="normal" fill="#FFFFFF" text-anchor="start">н. 508</text>
<path d="M800,213.5 L805,208 H854 L857,211 V215 L853,220 Z" fill="#123C3C"/>
<path d="M803,213 L807,208.5 M808,213 L812,208.5 M813,213 L817,208.5 M818,213 L822,208.5 M823,213 L827,208.5 M828,213 L832,208.5 M833,213 L837,208.5 M838,213 L842,208.5 M843,213 L847,208.5 M848,213 L852,208.5 M853,213 L857,208.5 " stroke="#000" stroke-width="1.2" fill="none"/>
<rect x="797.5" y="213.5" width="57" height="10" rx="5" fill="#0E4848" stroke="#00FFFF" stroke-width="1"/>
<rect x="802" y="219" width="48" height="4" fill="#063030"/>
<path d="M804,215 L811,215 L806,220 Z" fill="#888"/>
<circle cx="802.5" cy="218.5" r="3.8" fill="#00FFFF" stroke="#000" stroke-width="1.6"/>
<circle cx="849.5" cy="218.5" r="3.8" fill="#00FFFF" stroke="#000" stroke-width="1.6"/>
<text x="864" y="221" font-family="Liberation Sans" font-size="13" font-weight="bold" font-style="normal" fill="#FFFFFF" text-anchor="start" letter-spacing="1.5">568</text>
<rect x="850" y="223" width="1" height="18" fill="#FFFFFF"/>
<path d="M843.5,240.5 H848.5 V254.5 H843.5 Z" fill="#00FFFF" stroke="#000" stroke-width="1"/>
<path d="M848.5,242.5 H990.5 V252.5 H848.5 Z" fill="#00FFFF" stroke="#000" stroke-width="1"/>
<path d="M990.5,240.5 H994.5 V254.5 H990.5 Z" fill="#00FFFF" stroke="#000" stroke-width="1"/>
<circle cx="853.5" cy="247.5" r="3" fill="#00FFFF" stroke="#000"/>
<path d="M857,247.5 H990 M863.5,244 V251 M871.5,244 V251 M879.5,244 V251 M887.5,244 V251 M895.5,244 V251 M903.5,244 V251 M911.5,244 V251 M919.5,244 V251 M927.5,244 V251 M935.5,244 V251 M943.5,244 V251 M951.5,244 V251 M959.5,244 V251 M967.5,244 V251 M975.5,244 V251 M983.5,244 V251 " stroke="#808080" fill="none"/>
<path d="M982.5,236.5 H988.5 V240.5 H982.5 Z" fill="#00FFFF" stroke="#000" stroke-width="1"/>
<text x="969" y="229" font-family="Liberation Sans" font-size="13" font-weight="bold" font-style="normal" fill="#FFFFFF" text-anchor="start" letter-spacing="1.5">569</text>
<rect x="860" y="255" width="1" height="30" fill="#FFFFFF"/>
<rect x="860" y="294" width="1" height="7" fill="#FFFFFF"/>
<rect x="856" y="285" width="9" height="2" fill="#00FFFF"/>
<rect x="852" y="289" width="19" height="2" fill="#FFFF00"/>
<rect x="869" y="289" width="2" height="6" fill="#FFFF00"/>
<rect x="856" y="291" width="9" height="2" fill="#00FFFF"/>
<text x="829" y="280" font-family="Liberation Sans" font-size="13" font-weight="bold" font-style="normal" fill="#FFFFFF" text-anchor="start" letter-spacing="1.5">933</text>
<rect x="904" y="255" width="1" height="30" fill="#FFFFFF"/>
<rect x="904" y="294" width="1" height="7" fill="#FFFFFF"/>
<rect x="900" y="285" width="9" height="2" fill="#00FFFF"/>
<rect x="896" y="289" width="19" height="2" fill="#FFFF00"/>
<rect x="913" y="289" width="2" height="6" fill="#FFFF00"/>
<rect x="900" y="291" width="9" height="2" fill="#00FFFF"/>
<text x="873" y="280" font-family="Liberation Sans" font-size="13" font-weight="bold" font-style="normal" fill="#FFFFFF" text-anchor="start" letter-spacing="1.5">934</text>
<rect x="948" y="255" width="1" height="30" fill="#FFFFFF"/>
<rect x="948" y="294" width="1" height="7" fill="#FFFFFF"/>
<rect x="944" y="285" width="9" height="2" fill="#00FFFF"/>
<rect x="940" y="289" width="19" height="2" fill="#FFFF00"/>
<rect x="957" y="289" width="2" height="6" fill="#FFFF00"/>
<rect x="944" y="291" width="9" height="2" fill="#00FFFF"/>
<text x="917" y="280" font-family="Liberation Sans" font-size="13" font-weight="bold" font-style="normal" fill="#FFFFFF" text-anchor="start" letter-spacing="1.5">935</text>
<rect x="987" y="255" width="1" height="46" fill="#FFFFFF"/>
<rect x="854" y="545" width="9" height="2" fill="#00FFFF"/>
<rect x="850" y="549" width="19" height="2" fill="#FFFF00"/>
<rect x="867" y="549" width="2" height="6" fill="#FFFF00"/>
<rect x="854" y="551" width="9" height="2" fill="#00FFFF"/>
<text x="828" y="570" font-family="Liberation Sans" font-size="13" font-weight="bold" font-style="normal" fill="#FFFFFF" text-anchor="start" letter-spacing="1.5">929</text>
<rect x="897" y="545" width="9" height="2" fill="#00FFFF"/>
<rect x="893" y="549" width="19" height="2" fill="#FFFF00"/>
<rect x="910" y="549" width="2" height="6" fill="#FFFF00"/>
<rect x="897" y="551" width="9" height="2" fill="#00FFFF"/>
<text x="871" y="570" font-family="Liberation Sans" font-size="13" font-weight="bold" font-style="normal" fill="#FFFFFF" text-anchor="start" letter-spacing="1.5">930</text>
<rect x="940" y="545" width="9" height="2" fill="#00FFFF"/>
<rect x="936" y="549" width="19" height="2" fill="#FFFF00"/>
<rect x="953" y="549" width="2" height="6" fill="#FFFF00"/>
<rect x="940" y="551" width="9" height="2" fill="#00FFFF"/>
<text x="914" y="570" font-family="Liberation Sans" font-size="13" font-weight="bold" font-style="normal" fill="#FFFFFF" text-anchor="start" letter-spacing="1.5">931</text>
<rect x="983" y="545" width="9" height="2" fill="#00FFFF"/>
<rect x="979" y="549" width="19" height="2" fill="#FFFF00"/>
<rect x="996" y="549" width="2" height="6" fill="#FFFF00"/>
<rect x="983" y="551" width="9" height="2" fill="#00FFFF"/>
<text x="957" y="570" font-family="Liberation Sans" font-size="13" font-weight="bold" font-style="normal" fill="#FFFFFF" text-anchor="start" letter-spacing="1.5">932</text>
<path d="M1001.5,68.5 H1010.5 L1014,72.5 V83 L1017.5,86.5 V88.5 H1010.5 L1008,92.5 L1005.5,88.5 H994.5 V86.5 L998,82.5 V72.5 Z" fill="#00FFFF"/>
<path d="M994.5,88 V86.5 L998,82.5 V72.5 L1001.5,68.5 H1010.5 M1005.5,88.5 L1008,92.5" stroke="#000" fill="none"/>
<path d="M1010.5,68.5 L1014,72.5 V83 L1017.5,86.5 V88.5 H1010.5 L1008,92.5 M1005.5,88.5 H994.5" stroke="#FFF" fill="none"/>
<rect x="1023" y="62" width="1" height="674" fill="#988880"/>
</svg>
</body></html>
